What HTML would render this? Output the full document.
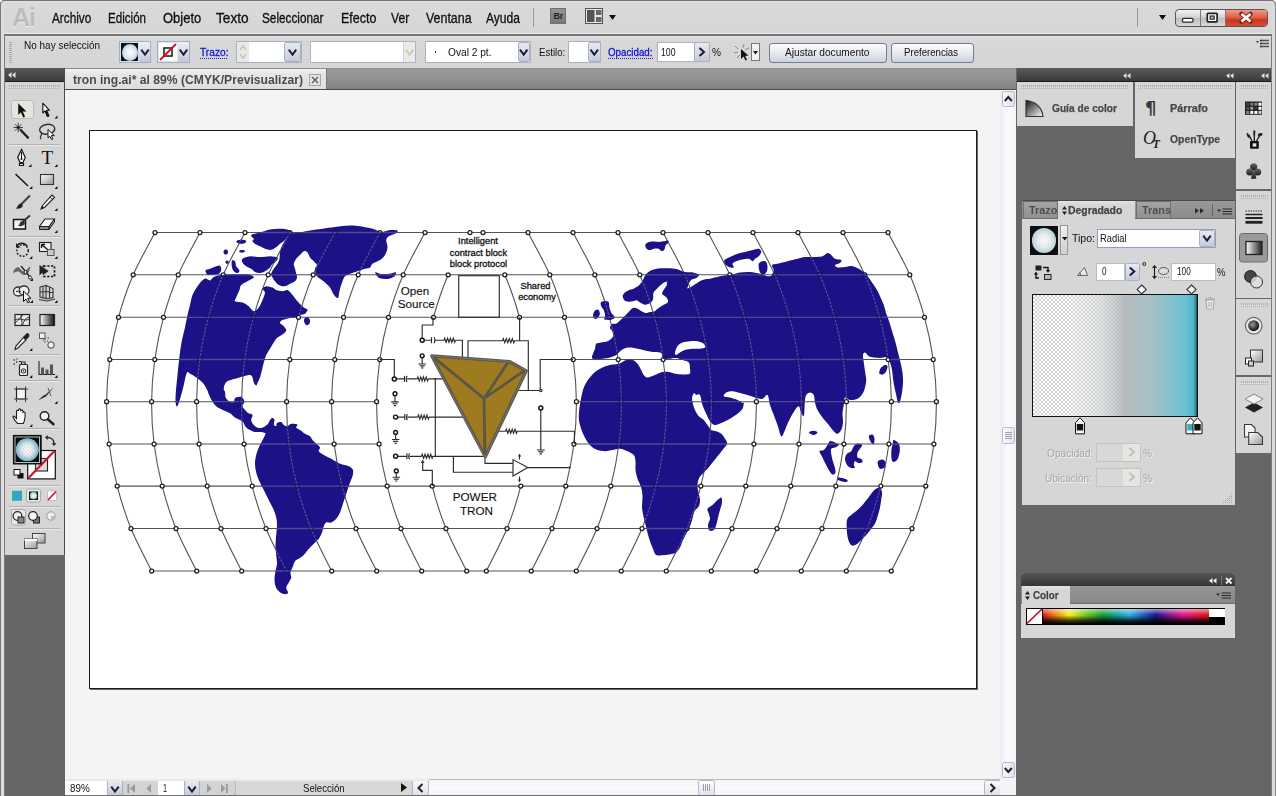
<!DOCTYPE html>
<html lang="es"><head><meta charset="utf-8"><title>tron ing.ai</title>
<style>
html,body{margin:0;padding:0}
body{width:1276px;height:796px;overflow:hidden;position:relative;background:#666;
 font-family:"Liberation Sans","DejaVu Sans",sans-serif;font-size:11px;color:#000;line-height:1}
.a{position:absolute}
.t{position:absolute;white-space:nowrap}
.pb{font-family:"DejaVu Sans","Liberation Sans",sans-serif;font-weight:bold;color:#4a4a4a;font-size:10px;letter-spacing:-.2px}
svg{position:absolute;overflow:visible}
.grip{position:absolute;height:4px;background-image:linear-gradient(0deg,transparent 0 1.500px,#d6d6d6 1.500px 2.500px,transparent 2.500px 4px),repeating-linear-gradient(90deg,#acacac 0 1px,transparent 1px 2px);opacity:.9}
.inp{position:absolute;background:#fff;border:1px solid #9aa7bd;box-sizing:border-box}
.ddb{position:absolute;background:linear-gradient(#e8eaf2,#c6c9d8);border:1px solid #aab0c4;box-sizing:border-box;border-radius:2px}
.btn{position:absolute;box-sizing:border-box;border:1px solid #6f7f9c;border-radius:3px;background:linear-gradient(#fdfdfd,#e4e5ea 60%,#cdd0dc);text-align:center}
</style></head>
<body>
<div class="a" style="left:0;top:0;width:1276px;height:34px;background:linear-gradient(#e4e4e4 0,#dadada 3px,#d6d6d6 100%)"></div>
<div class="a" style="left:4px;top:33px;width:1268px;height:1px;background:#ececec"></div>
<div class="a" style="left:4px;top:34px;width:1268px;height:1.600px;background:#747474"></div>
<div class="t" style="left:12px;top:5px;font-size:25px;color:#bdbdbd;font-weight:bold;letter-spacing:-1px;text-shadow:0 1px 0 #eee">Ai</div>
<div class="t" style="left:51.7px;top:11.16px;font-size:14px;line-height:14px;color:#111;font-family:'Liberation Sans',sans-serif;transform:scaleX(0.842);transform-origin:0 0;-webkit-text-stroke:.3px #111;">Archivo</div>
<div class="t" style="left:108px;top:11.16px;font-size:14px;line-height:14px;color:#111;font-family:'Liberation Sans',sans-serif;transform:scaleX(0.828);transform-origin:0 0;-webkit-text-stroke:.3px #111;">Edición</div>
<div class="t" style="left:162.5px;top:11.16px;font-size:14px;line-height:14px;color:#111;font-family:'Liberation Sans',sans-serif;transform:scaleX(0.926);transform-origin:0 0;-webkit-text-stroke:.3px #111;">Objeto</div>
<div class="t" style="left:216px;top:11.16px;font-size:14px;line-height:14px;color:#111;font-family:'Liberation Sans',sans-serif;transform:scaleX(0.977);transform-origin:0 0;-webkit-text-stroke:.3px #111;">Texto</div>
<div class="t" style="left:262px;top:11.16px;font-size:14px;line-height:14px;color:#111;font-family:'Liberation Sans',sans-serif;transform:scaleX(0.841);transform-origin:0 0;-webkit-text-stroke:.3px #111;">Seleccionar</div>
<div class="t" style="left:340.5px;top:11.16px;font-size:14px;line-height:14px;color:#111;font-family:'Liberation Sans',sans-serif;transform:scaleX(0.894);transform-origin:0 0;-webkit-text-stroke:.3px #111;">Efecto</div>
<div class="t" style="left:390.5px;top:11.16px;font-size:14px;line-height:14px;color:#111;font-family:'Liberation Sans',sans-serif;transform:scaleX(0.866);transform-origin:0 0;-webkit-text-stroke:.3px #111;">Ver</div>
<div class="t" style="left:425.5px;top:11.16px;font-size:14px;line-height:14px;color:#111;font-family:'Liberation Sans',sans-serif;transform:scaleX(0.886);transform-origin:0 0;-webkit-text-stroke:.3px #111;">Ventana</div>
<div class="t" style="left:486px;top:11.16px;font-size:14px;line-height:14px;color:#111;font-family:'Liberation Sans',sans-serif;transform:scaleX(0.862);transform-origin:0 0;-webkit-text-stroke:.3px #111;">Ayuda</div>
<div class="a" style="left:533px;top:8px;width:1px;height:19px;background:#9a9a9a"></div>
<div class="a" style="left:550px;top:8.300px;width:16px;height:15.400px;background:linear-gradient(#929292,#7a7a7a);border:1px solid #707070;box-sizing:border-box"></div>
<div class="t" style="left:553.5px;top:11.5px;font-size:9px;color:#262626;font-weight:bold;letter-spacing:-.3px">Br</div>
<svg width="18" height="16" style="left:585px;top:8px"><rect x=".5" y=".5" width="17" height="15" fill="#e6e6e6" stroke="#555"/><rect x="2" y="2" width="7.5" height="12" fill="#555"/><rect x="11" y="2" width="5.5" height="5" fill="#666"/><rect x="11" y="9" width="5.5" height="5" fill="#666"/></svg>
<svg width="8" height="6" style="left:609px;top:15px"><path d="M0 0H7L3.5 5Z" fill="#111"/></svg>
<div class="a" style="left:1137px;top:8px;width:1px;height:19px;background:#9a9a9a"></div>
<svg width="8" height="6" style="left:1159px;top:15px"><path d="M0 0H7L3.5 5Z" fill="#111"/></svg>
<div class="a" style="left:1175px;top:9px;width:93px;height:18px;border:1px solid #555;border-radius:4px;box-sizing:border-box;overflow:hidden;background:linear-gradient(#f4f4f4,#cfcfcf 50%,#bdbdbd 51%,#d8d8d8)"><div class="a" style="left:24px;top:0;width:1px;height:18px;background:#777"></div><div class="a" style="left:49px;top:0;width:1px;height:18px;background:#777"></div><div class="a" style="left:50px;top:0;width:43px;height:18px;background:linear-gradient(#ee9a86,#e0573f 45%,#c8341c 55%,#d8583c)"></div></div>
<svg width="93" height="18" style="left:1175px;top:9px"><rect x="7.500" y="9.300" width="10.500" height="3.800" fill="#fff" stroke="#2a2a2a" stroke-width="1.300" rx="1.200"/><rect x="32.300" y="4.300" width="9.800" height="8.600" fill="#fff" stroke="#222" stroke-width="1.700" rx=".8"/><rect x="35.200" y="7" width="4" height="3.200" fill="#bbb" stroke="#222" stroke-width="1.100"/><path d="M66.500 5L75.500 12.500M75.500 5L66.500 12.500" stroke="#7a2412" stroke-width="4.600" stroke-linecap="round"/><path d="M66.500 5L75.500 12.500M75.500 5L66.500 12.500" stroke="#fff" stroke-width="2.900" stroke-linecap="butt"/></svg>
<div class="a" style="left:5px;top:35.600px;width:1266px;height:32.400px;background:linear-gradient(#e8e8e8 0,#d8d8d8 2px,#d5d5d5 100%)"></div>
<div class="a" style="left:9px;top:41px;width:3px;height:22px;background-image:repeating-linear-gradient(0deg,#aaa 0 1px,transparent 1px 2px)"></div>
<div class="t" style="left:24px;top:40.27px;font-size:11.5px;line-height:11.5px;color:#111;font-family:'Liberation Sans',sans-serif;transform:scaleX(0.868);transform-origin:0 0;">No hay selección</div>
<div class="a" style="left:119px;top:41px;width:32px;height:22px;border:1px solid #9fb0cc;box-sizing:border-box;background:#dfe3ee"></div>
<div class="a" style="left:121px;top:43px;width:17px;height:18px;background:#0a1216"></div>
<div class="a" style="left:121.500px;top:43.5px;width:16px;height:17px;border-radius:50%;background:radial-gradient(circle,#fdfdfd 0,#dfe9ec 45%,#7fb4c2 100%)"></div>
<div class="a" style="left:139px;top:42px;width:11px;height:20px;background:linear-gradient(#eef0f6,#c3c7d6)"></div>
<svg width="1" height="1" style="left:0;top:0"><polyline points="141.9,50.5 145.0,54.5 148.1,50.5" fill="none" stroke="#1a1a3a" stroke-width="2" stroke-linecap="square"/></svg>
<div class="a" style="left:157px;top:41px;width:33px;height:22px;border:1px solid #9fb0cc;box-sizing:border-box;background:#dfe3ee"></div>
<div class="a" style="left:159px;top:43px;width:18px;height:18px;background:#fff"></div>
<svg width="20" height="20" style="left:158px;top:42px"><rect x="6" y="6" width="8" height="8" fill="none" stroke="#222" stroke-width="1.6"/><path d="M2 18L18 2" stroke="#d0102a" stroke-width="2"/></svg>
<div class="a" style="left:178px;top:42px;width:11px;height:20px;background:linear-gradient(#eef0f6,#c3c7d6)"></div>
<svg width="1" height="1" style="left:0;top:0"><polyline points="180.4,50.5 183.5,54.5 186.6,50.5" fill="none" stroke="#1a1a3a" stroke-width="2" stroke-linecap="square"/></svg>
<div class="t" style="left:199.5px;top:46.57px;font-size:11.5px;line-height:11.5px;color:#1212d8;font-family:'Liberation Sans',sans-serif;transform:scaleX(0.886);transform-origin:0 0;-webkit-text-stroke:.3px #1212d8;">Trazo:</div>
<div class="a" style="left:199.500px;top:58px;width:28.500px;height:1px;background-image:repeating-linear-gradient(90deg,#1414c8 0 1px,transparent 1px 2px)"></div>
<div class="inp" style="left:236px;top:41px;width:66px;height:22px;border-color:#a9b3c6"></div>
<div class="a" style="left:237px;top:42px;width:12px;height:20px;background:#e9e9e4"></div>
<svg width="12" height="20" style="left:237px;top:42px"><path d="M3 8L6 4L9 8M3 12L6 16L9 12" fill="none" stroke="#c3c3bb" stroke-width="1.5"/></svg>
<div class="ddb" style="left:284px;top:42px;width:17px;height:20px"></div>
<svg width="1" height="1" style="left:0;top:0"><polyline points="289.4,50.5 292.5,54.5 295.6,50.5" fill="none" stroke="#1a1a3a" stroke-width="2" stroke-linecap="square"/></svg>
<div class="inp" style="left:310px;top:41px;width:106px;height:22px;border-color:#a9b3c6"></div>
<div class="a" style="left:403px;top:42px;width:12px;height:20px;background:#ebebe6;border-left:1px solid #d4d4ce;box-sizing:border-box"></div>
<svg width="1" height="1" style="left:0;top:0"><polyline points="406.4,50.5 409.5,54.5 412.6,50.5" fill="none" stroke="#c9c9c0" stroke-width="2" stroke-linecap="square"/></svg>
<div class="inp" style="left:424.500px;top:41px;width:106px;height:22px;border-color:#a9b3c6"></div>
<div class="ddb" style="left:517.500px;top:42px;width:12.5px;height:20px"></div>
<svg width="1" height="1" style="left:0;top:0"><polyline points="520.6,50.5 523.7,54.5 526.8,50.5" fill="none" stroke="#1a1a3a" stroke-width="2" stroke-linecap="square"/></svg>
<div class="a" style="left:434.500px;top:51px;width:1.5px;height:1.5px;background:#333"></div>
<div class="t" style="left:447.5px;top:46.57px;font-size:11.5px;line-height:11.5px;color:#111;font-family:'Liberation Sans',sans-serif;transform:scaleX(0.884);transform-origin:0 0;">Oval 2 pt.</div>
<div class="t" style="left:538.7px;top:46.57px;font-size:11.5px;line-height:11.5px;color:#111;font-family:'Liberation Sans',sans-serif;transform:scaleX(0.840);transform-origin:0 0;">Estilo:</div>
<div class="inp" style="left:568px;top:41px;width:33px;height:22px;border-color:#a9b3c6"></div>
<div class="ddb" style="left:588px;top:42px;width:12.5px;height:20px"></div>
<svg width="1" height="1" style="left:0;top:0"><polyline points="591.2,50.5 594.3,54.5 597.4,50.5" fill="none" stroke="#1a1a3a" stroke-width="2" stroke-linecap="square"/></svg>
<div class="t" style="left:608px;top:46.57px;font-size:11.5px;line-height:11.5px;color:#1212d8;font-family:'Liberation Sans',sans-serif;transform:scaleX(0.849);transform-origin:0 0;-webkit-text-stroke:.3px #1212d8;">Opacidad:</div>
<div class="a" style="left:608px;top:58px;width:44.500px;height:1px;background-image:repeating-linear-gradient(90deg,#1414c8 0 1px,transparent 1px 2px)"></div>
<div class="inp" style="left:656.500px;top:42px;width:38px;height:20px;border-color:#a9b3c6"></div>
<div class="t" style="left:661px;top:46.69px;font-size:11px;line-height:11px;color:#111;font-family:'Liberation Sans',sans-serif;transform:scaleX(0.790);transform-origin:0 0;">100</div>
<div class="ddb" style="left:694px;top:42px;width:16px;height:20px"></div>
<svg width="1" height="1" style="left:0;top:0"><polyline points="699.500,48 704,52 699.5,56" fill="none" stroke="#1a1a3a" stroke-width="2"/></svg>
<div class="t" style="left:712px;top:46.57px;font-size:11.5px;line-height:11.5px;color:#111;font-family:'Liberation Sans',sans-serif;transform:scaleX(0.880);transform-origin:0 0;">%</div>
<svg width="18" height="18" style="left:733px;top:43px"><path d="M2 3l3 3M11 1l-1 4M16 5l-4 2M1 10l4-1M4 15l3-3" stroke="#888" stroke-width="1"/><path d="M8 6v10l2.500-2.500 2 4 1.500-.7-2-4h3.500z" fill="#111"/></svg>
<div class="a" style="left:750.500px;top:43px;width:9px;height:18px;border:1px solid #777;box-sizing:border-box;background:#f2f2f2"></div>
<svg width="6" height="4" style="left:752.500px;top:51px"><path d="M0 0H5L2.500 3.500Z" fill="#111"/></svg>
<div class="btn" style="left:768.500px;top:42.5px;width:118px;height:20px"></div>
<div class="t" style="left:784.5px;top:47.07px;font-size:11.5px;line-height:11.5px;color:#111;font-family:'Liberation Sans',sans-serif;transform:scaleX(0.881);transform-origin:0 0;">Ajustar documento</div>
<div class="btn" style="left:891px;top:42.5px;width:83px;height:20px"></div>
<div class="t" style="left:904px;top:47.07px;font-size:11.5px;line-height:11.5px;color:#111;font-family:'Liberation Sans',sans-serif;transform:scaleX(0.837);transform-origin:0 0;">Preferencias</div>
<svg width="14" height="10" style="left:1256px;top:39px"><path d="M0 2H3L1.500 4Z" fill="#333"/><path d="M5 1.500H13M5 4.500H13M5 7.500H13" stroke="#555" stroke-width="1.400"/><path d="M4 1.500H5.500M4 4.500H5.500M4 7.500H5.500" stroke="#222" stroke-width="1.400"/></svg>
<div class="a" style="left:65px;top:68px;width:951px;height:21px;background:linear-gradient(#8a8a8a 0,#9a9a9a 2px,#929292 50%,#828282 100%)"></div>
<div class="a" style="left:65px;top:89px;width:951px;height:1px;background:#4c4c4c"></div>
<div class="a" style="left:65px;top:69px;width:262px;height:20px;background:linear-gradient(#f2f2f2,#e6e6e6 5px,#dedede);border-right:1px solid #777;box-sizing:border-box"></div>
<div class="t" style="left:73.2px;top:72.7px;font-size:13px;line-height:13px;color:#4b4b4b;font-family:'Liberation Sans',sans-serif;font-weight:bold;transform:scaleX(0.934);transform-origin:0 0;">tron ing.ai* al 89% (CMYK/Previsualizar)</div>
<svg width="12" height="12" style="left:309px;top:74px"><rect x=".5" y=".5" width="11" height="11" fill="#e2e2e2" stroke="#a8a8a8"/><path d="M3 3L9 9M9 3L3 9" stroke="#555" stroke-width="1.200"/></svg>
<div class="a" style="left:65px;top:90px;width:935px;height:689px;background:#f4f4f4"></div>
<div class="a" style="left:88.500px;top:129.500px;width:888.500px;height:559px;background:#fff;border:1.300px solid #1c1c1c;box-sizing:border-box;box-shadow:1px 1px 0 #666"></div>
<svg width="1276" height="796" viewBox="0 0 1276 796" style="left:0;top:0">
<defs><g id="land">
<path d="M204.5 278.8C206.6 277.8 208.5 280.8 210.0 280.5C211.5 280.2 211.7 277.9 213.8 277.0C215.8 276.1 219.4 275.4 222.5 275.0C225.6 274.6 229.2 274.6 232.5 274.5C235.8 274.4 239.6 274.4 242.5 274.5C245.4 274.6 248.1 274.5 250.0 275.0C251.9 275.5 254.2 276.5 253.8 277.5C253.3 278.5 249.6 280.0 247.5 281.2C245.4 282.5 242.6 283.5 241.2 285.0C239.9 286.5 240.3 287.9 239.5 290.0C238.7 292.1 237.0 295.6 236.2 297.5C235.5 299.4 234.0 300.4 235.0 301.2C236.0 302.1 240.2 301.7 242.5 302.5C244.8 303.3 246.9 304.8 248.8 306.2C250.6 307.7 252.1 311.0 253.8 311.2C255.4 311.5 257.3 309.4 258.8 307.5C260.2 305.6 261.5 302.5 262.5 300.0C263.5 297.5 265.0 294.4 265.0 292.5C265.0 290.6 262.3 289.8 262.5 288.8C262.7 287.7 264.6 286.5 266.2 286.2C267.9 286.0 270.8 286.9 272.5 287.5C274.2 288.1 274.6 289.4 276.2 290.0C277.9 290.6 280.6 291.2 282.5 291.2C284.4 291.2 285.8 289.4 287.5 290.0C289.2 290.6 290.8 293.1 292.5 295.0C294.2 296.9 295.6 299.2 297.5 301.2C299.4 303.3 302.1 306.1 303.8 307.5C305.4 308.9 307.3 308.5 307.5 309.5C307.7 310.5 306.2 312.8 305.0 313.8C303.8 314.7 301.5 314.5 300.0 315.0C298.5 315.5 297.9 316.5 296.2 317.0C294.6 317.5 292.3 317.5 290.0 318.0C287.7 318.5 284.2 319.2 282.5 320.0C280.8 320.8 279.8 322.0 280.0 323.0C280.2 324.0 282.7 325.0 283.8 326.2C284.8 327.5 286.5 329.1 286.2 330.5C286.0 331.9 284.0 333.3 282.5 334.5C281.0 335.7 279.0 336.2 277.5 337.5C276.0 338.8 275.0 340.6 273.8 342.5C272.5 344.4 271.2 346.7 270.0 348.8C268.8 350.8 267.3 352.7 266.2 355.0C265.2 357.3 264.5 360.0 263.8 362.5C263.0 365.0 262.6 367.5 262.0 370.0C261.4 372.5 260.8 375.3 260.0 377.5C259.2 379.7 258.1 381.7 257.5 383.0C256.9 384.3 256.9 385.6 256.2 385.5C255.6 385.4 254.4 383.8 253.8 382.5C253.1 381.2 253.1 378.8 252.5 377.5C251.9 376.2 251.5 375.2 250.0 375.0C248.5 374.8 246.2 375.6 243.8 376.2C241.2 376.9 237.7 377.9 235.0 378.8C232.3 379.6 229.2 380.2 227.5 381.2C225.8 382.3 225.1 383.5 224.5 385.0C223.9 386.5 223.7 388.1 223.8 390.0C223.8 391.9 224.2 394.4 225.0 396.2C225.8 398.1 227.3 400.3 228.8 401.2C230.2 402.2 232.7 402.5 233.8 402.0C234.8 401.5 234.0 398.8 235.0 398.0C236.0 397.2 238.5 396.7 240.0 397.0C241.5 397.3 243.3 398.5 243.8 400.0C244.2 401.5 242.1 404.4 242.5 406.2C242.9 408.1 245.2 409.8 246.2 411.2C247.3 412.7 249.8 414.2 248.8 415.0C247.7 415.8 242.2 416.1 240.0 416.0C237.8 415.9 236.9 415.1 235.2 414.2C233.6 413.4 232.1 411.6 230.2 410.8C228.4 409.9 226.2 409.9 224.0 409.2C221.8 408.6 219.0 408.2 217.0 406.8C215.0 405.3 213.5 403.0 212.0 400.5C210.5 398.0 209.5 394.7 208.0 391.8C206.5 388.8 205.1 385.5 203.0 383.0C200.9 380.5 197.3 378.2 195.2 376.8C193.2 375.2 191.9 374.7 190.5 374.0C189.1 373.3 188.1 370.7 187.0 372.5C185.9 374.3 184.8 380.8 183.8 385.0C182.7 389.2 181.6 393.9 180.5 397.5C179.4 401.1 177.8 406.1 177.0 406.5C176.2 406.9 175.6 403.2 175.5 400.0C175.4 396.8 175.9 391.7 176.2 387.5C176.6 383.3 177.1 379.2 177.5 375.0C177.9 370.8 178.3 366.2 178.8 362.5C179.2 358.8 179.5 356.2 180.0 352.5C180.5 348.8 181.2 344.2 182.0 340.0C182.8 335.8 184.1 331.7 185.0 327.5C185.9 323.3 186.7 318.8 187.5 315.0C188.3 311.2 189.2 308.3 190.0 305.0C190.8 301.7 191.2 298.1 192.5 295.0C193.8 291.9 195.5 289.0 197.5 286.2C199.5 283.5 202.4 279.7 204.5 278.8Z"/>
<path d="M290.0 233.8C292.3 232.7 296.7 233.0 300.0 232.5C303.3 232.0 306.2 231.1 310.0 230.5C313.8 229.9 318.3 229.3 322.5 228.8C326.7 228.2 330.4 227.5 335.0 227.0C339.6 226.5 345.8 225.6 350.0 225.5C354.2 225.4 356.2 225.7 360.0 226.2C363.8 226.8 369.0 227.8 372.5 228.8C376.0 229.7 378.3 231.8 381.2 232.0C384.2 232.2 387.3 230.2 390.0 230.0C392.7 229.8 396.7 229.9 397.5 230.5C398.3 231.1 396.5 232.8 395.0 233.8C393.5 234.7 390.2 235.2 388.8 236.2C387.3 237.3 386.5 238.1 386.2 240.0C386.0 241.9 387.7 245.0 387.5 247.5C387.3 250.0 386.2 252.9 385.0 255.0C383.8 257.1 382.1 258.5 380.0 260.0C377.9 261.5 374.2 262.5 372.5 263.8C370.8 265.0 371.2 266.7 370.0 267.5C368.8 268.3 367.1 268.1 365.0 268.8C362.9 269.4 360.0 270.4 357.5 271.2C355.0 272.1 352.1 272.9 350.0 273.8C347.9 274.6 346.2 275.0 345.0 276.2C343.8 277.5 343.3 279.2 342.5 281.2C341.7 283.3 340.6 286.5 340.0 288.8C339.4 291.0 339.1 293.5 338.8 295.0C338.4 296.5 338.6 297.8 338.0 298.0C337.4 298.2 335.9 297.2 335.0 296.2C334.1 295.3 333.3 294.0 332.5 292.5C331.7 291.0 331.2 289.2 330.0 287.5C328.8 285.8 326.7 284.0 325.0 282.5C323.3 281.0 321.5 280.0 320.0 278.8C318.5 277.5 317.1 276.7 316.2 275.0C315.4 273.3 314.9 270.4 315.0 268.8C315.1 267.1 317.2 266.2 317.0 265.0C316.8 263.8 314.9 262.5 313.8 261.2C312.6 260.0 311.0 259.0 310.0 257.5C309.0 256.0 308.5 253.5 307.5 252.5C306.5 251.5 305.0 250.8 303.8 251.2C302.5 251.7 301.2 253.8 300.0 255.0C298.8 256.2 297.3 257.3 296.2 258.8C295.2 260.2 294.0 262.1 293.8 263.8C293.5 265.4 294.6 267.1 295.0 268.8C295.4 270.4 295.9 272.3 296.2 273.8C296.6 275.2 297.2 276.2 297.0 277.5C296.8 278.8 296.2 280.2 295.0 281.2C293.8 282.3 291.7 282.9 290.0 283.8C288.3 284.6 286.9 286.0 285.0 286.2C283.1 286.5 280.4 285.8 278.8 285.0C277.1 284.2 276.0 282.5 275.0 281.2C274.0 280.0 273.1 278.8 272.5 277.5C271.9 276.2 271.0 275.2 271.2 273.8C271.5 272.3 272.7 270.4 273.8 268.8C274.8 267.1 276.5 265.4 277.5 263.8C278.5 262.1 279.1 260.6 279.5 258.8C279.9 256.9 279.5 254.8 280.0 252.5C280.5 250.2 281.5 247.3 282.5 245.0C283.5 242.7 285.0 240.6 286.2 238.8C287.5 236.9 287.7 234.8 290.0 233.8Z"/>
<path d="M251.2 235.0C252.3 234.0 256.9 233.4 260.0 232.5C263.1 231.6 266.7 230.1 270.0 229.5C273.3 228.9 276.9 228.7 280.0 228.8C283.1 228.8 286.9 229.3 288.8 230.0C290.6 230.7 291.5 232.0 291.2 233.0C291.0 234.0 288.5 235.1 287.5 236.2C286.5 237.4 286.2 238.8 285.0 240.0C283.8 241.2 281.2 242.7 280.0 243.8C278.8 244.8 278.5 245.4 277.5 246.2C276.5 247.1 275.0 248.1 273.8 248.8C272.5 249.4 271.5 250.0 270.0 250.0C268.5 250.0 266.7 249.4 265.0 248.8C263.3 248.1 261.5 247.0 260.0 246.2C258.5 245.5 257.5 245.3 256.2 244.5C255.0 243.7 252.9 242.2 252.5 241.2C252.1 240.3 254.0 239.8 253.8 238.8C253.5 237.7 250.2 236.0 251.2 235.0Z"/>
<path d="M242.5 258.8C243.8 257.7 247.1 256.5 250.0 256.2C252.9 256.0 256.7 257.0 260.0 257.0C263.3 257.0 267.1 256.2 270.0 256.2C272.9 256.3 276.5 256.7 277.5 257.5C278.5 258.3 277.1 260.2 276.2 261.2C275.4 262.3 273.5 262.7 272.5 263.8C271.5 264.8 271.2 266.2 270.0 267.5C268.8 268.8 266.7 270.3 265.0 271.2C263.3 272.2 261.7 272.9 260.0 273.0C258.3 273.1 256.5 272.7 255.0 272.0C253.5 271.3 252.7 269.7 251.2 268.8C249.8 267.8 247.7 267.3 246.2 266.2C244.8 265.2 243.1 263.8 242.5 262.5C241.9 261.2 241.2 259.8 242.5 258.8Z"/>
<path d="M236.2 241.8C236.1 241.1 237.5 240.3 238.8 240.0C240.0 239.7 242.5 239.5 243.8 239.8C245.0 240.0 246.1 240.7 246.2 241.2C246.4 241.8 245.6 242.8 244.5 243.2C243.4 243.7 240.9 244.0 239.5 243.8C238.1 243.5 236.4 242.4 236.2 241.8Z"/>
<path d="M223.5 252.0C223.5 251.3 223.9 250.4 224.5 250.0C225.1 249.6 226.4 249.4 227.0 249.8C227.6 250.1 228.0 251.2 228.0 252.0C228.0 252.8 227.6 253.9 227.0 254.2C226.4 254.6 225.1 254.6 224.5 254.2C223.9 253.9 223.5 252.7 223.5 252.0Z"/>
<path d="M239.2 251.2C239.3 250.8 240.2 250.2 241.0 250.0C241.8 249.8 243.3 250.0 244.0 250.2C244.7 250.5 245.1 251.1 245.0 251.5C244.9 251.9 244.0 252.3 243.2 252.5C242.5 252.7 241.2 252.7 240.5 252.5C239.8 252.3 239.2 251.7 239.2 251.2Z"/>
<path d="M225.5 262.0C225.6 261.5 226.0 260.7 226.5 260.5C227.0 260.3 227.9 260.7 228.2 261.0C228.6 261.3 228.9 262.0 228.8 262.5C228.6 263.0 228.0 263.6 227.5 263.8C227.0 263.9 226.3 263.8 226.0 263.5C225.7 263.2 225.4 262.5 225.5 262.0Z"/>
<path d="M232.0 260.5C232.5 259.7 234.3 260.3 235.0 261.2C235.7 262.2 235.5 264.7 236.2 266.2C237.0 267.8 239.3 269.4 239.5 270.5C239.7 271.6 238.5 272.9 237.5 273.0C236.5 273.1 234.7 272.4 233.8 271.2C232.8 270.1 232.0 268.0 231.8 266.2C231.5 264.5 231.5 261.3 232.0 260.5Z"/>
<path d="M205.5 270.5C205.9 269.5 208.2 269.5 210.0 268.8C211.8 268.0 214.6 266.8 216.2 266.2C217.9 265.8 219.2 265.1 220.0 265.8C220.8 266.4 221.5 268.7 221.2 270.0C221.0 271.3 220.2 273.0 218.8 273.8C217.3 274.5 214.4 274.4 212.5 274.5C210.6 274.6 208.7 275.2 207.5 274.5C206.3 273.8 205.1 271.5 205.5 270.5Z"/>
<path d="M375.2 272.0C375.4 271.5 377.0 272.7 378.0 273.0C379.0 273.3 379.5 273.8 381.0 274.0C382.5 274.2 384.9 274.2 386.8 274.1C388.6 274.0 390.5 273.5 392.0 273.2C393.5 273.0 395.2 272.1 395.8 272.4C396.3 272.7 395.5 274.3 395.2 275.0C395.0 275.7 395.2 276.1 394.0 276.8C392.8 277.4 390.2 278.6 388.0 278.9C385.8 279.2 382.8 279.1 381.0 278.6C379.2 278.1 378.0 277.1 377.0 276.0C376.0 274.9 375.1 272.5 375.2 272.0Z"/>
<path d="M304.0 321.2C303.8 320.1 304.3 318.6 305.0 318.0C305.7 317.4 307.2 317.1 308.0 317.5C308.8 317.9 309.8 319.4 310.0 320.5C310.2 321.6 309.9 323.2 309.2 324.0C308.6 324.8 307.1 325.5 306.2 325.0C305.4 324.5 304.2 322.4 304.0 321.2Z"/>
<path d="M208.8 390.0C206.8 391.8 210.5 397.7 212.0 400.5C213.5 403.3 215.5 405.3 217.5 407.0C219.5 408.7 221.8 409.4 224.0 410.5C226.2 411.6 228.8 412.4 230.5 413.5C232.2 414.6 233.0 416.2 234.5 417.2C236.0 418.3 238.0 418.9 239.5 419.8C241.0 420.6 242.2 421.0 243.2 422.2C244.3 423.5 244.6 425.7 245.8 427.0C246.9 428.3 248.5 429.2 250.0 430.0C251.5 430.8 253.1 431.7 255.0 432.0C256.9 432.3 259.2 431.9 261.2 432.0C263.3 432.1 265.8 434.1 267.5 432.5C269.2 430.9 271.2 423.8 271.2 422.5C271.2 421.2 268.8 423.8 267.5 424.5C266.2 425.2 265.2 426.4 263.8 427.0C262.3 427.6 260.4 428.3 258.8 428.0C257.1 427.7 255.0 426.3 253.8 425.0C252.5 423.7 251.5 421.7 251.2 420.0C251.0 418.3 253.1 416.2 252.5 415.0C251.9 413.8 249.2 413.6 247.5 413.0C245.8 412.4 243.5 412.4 242.5 411.2C241.5 410.1 241.0 407.9 241.2 406.2C241.5 404.6 243.8 402.8 243.8 401.2C243.8 399.7 242.3 397.5 241.2 397.0C240.2 396.5 238.5 397.1 237.5 398.0C236.5 398.9 236.2 401.5 235.0 402.5C233.8 403.5 231.6 404.2 230.0 403.8C228.4 403.3 226.5 402.3 225.5 400.0C224.5 397.7 226.5 391.7 223.8 390.0C221.0 388.3 210.7 388.2 208.8 390.0Z"/>
<path d="M272.5 418.0C273.2 418.0 274.3 418.9 274.5 420.0C274.7 421.1 273.5 423.5 273.8 424.5C274.0 425.5 275.7 426.5 276.2 426.2C276.8 426.0 276.2 423.7 277.0 423.0C277.8 422.3 280.1 421.7 281.2 422.0C282.4 422.3 282.7 424.3 283.8 425.0C284.8 425.7 286.2 426.5 287.5 426.2C288.8 426.0 289.6 424.0 291.2 423.8C292.9 423.5 296.7 423.9 297.5 424.5C298.3 425.1 295.8 426.6 296.2 427.5C296.7 428.4 298.5 429.0 300.0 430.0C301.5 431.0 303.3 432.7 305.0 433.8C306.7 434.8 308.8 435.2 310.0 436.2C311.2 437.3 311.5 438.8 312.5 440.0C313.5 441.2 315.0 442.5 316.2 443.8C317.5 445.0 319.6 446.2 320.0 447.5C320.4 448.8 318.1 450.0 318.8 451.2C319.4 452.5 321.5 453.6 323.8 455.0C326.0 456.4 329.8 458.0 332.5 459.5C335.2 461.0 337.3 462.6 340.0 463.8C342.7 464.9 346.6 465.2 348.8 466.2C350.9 467.3 352.4 468.3 353.0 470.0C353.6 471.7 353.0 474.2 352.5 476.2C352.0 478.3 350.8 480.2 350.0 482.5C349.2 484.8 348.3 487.5 347.5 490.0C346.7 492.5 345.8 495.0 345.0 497.5C344.2 500.0 343.3 502.5 342.5 505.0C341.7 507.5 341.0 510.2 340.0 512.5C339.0 514.8 337.7 517.1 336.2 518.8C334.8 520.4 332.9 521.9 331.2 522.5C329.6 523.1 327.5 521.9 326.2 522.5C325.0 523.1 324.5 524.6 323.8 526.2C323.0 527.9 322.8 530.4 322.0 532.5C321.2 534.6 320.1 536.9 318.8 538.8C317.4 540.6 315.4 542.1 313.8 543.8C312.1 545.4 310.4 546.9 308.8 548.8C307.1 550.6 305.4 553.3 303.8 555.0C302.1 556.7 300.2 557.7 298.8 558.8C297.3 559.8 296.0 559.8 295.0 561.2C294.0 562.7 293.2 565.6 292.5 567.5C291.8 569.4 290.7 570.8 290.5 572.5C290.3 574.2 291.5 575.8 291.2 577.5C291.0 579.2 289.6 580.8 288.8 582.5C287.9 584.2 286.4 585.8 286.2 587.5C286.1 589.2 288.4 591.9 288.0 593.0C287.6 594.1 285.3 594.3 283.8 594.0C282.2 593.7 280.1 592.5 278.8 591.2C277.4 590.0 276.2 588.3 275.5 586.2C274.8 584.2 274.5 581.2 274.5 578.8C274.5 576.2 275.1 573.8 275.5 571.2C275.9 568.8 276.9 566.5 277.0 563.8C277.1 561.0 276.5 558.1 276.2 555.0C276.0 551.9 275.5 548.3 275.5 545.0C275.5 541.7 276.0 538.3 276.2 535.0C276.5 531.7 277.0 527.9 277.0 525.0C277.0 522.1 276.8 520.0 276.2 517.5C275.7 515.0 274.8 512.5 273.8 510.0C272.7 507.5 271.2 505.0 270.0 502.5C268.8 500.0 267.5 497.5 266.2 495.0C265.0 492.5 263.8 490.0 262.5 487.5C261.2 485.0 259.8 482.5 258.8 480.0C257.7 477.5 256.9 475.2 256.2 472.5C255.6 469.8 255.0 466.7 255.0 463.8C255.0 460.8 255.6 457.7 256.2 455.0C256.9 452.3 257.8 449.8 258.8 447.5C259.7 445.2 261.0 443.3 262.0 441.2C263.0 439.2 264.3 436.9 265.0 435.0C265.7 433.1 265.8 431.8 266.2 430.0C266.8 428.2 267.4 426.2 268.0 424.5C268.6 422.8 269.2 421.1 270.0 420.0C270.8 418.9 271.8 418.0 272.5 418.0Z"/>
<path d="M622.7 296.5C622.5 295.3 623.3 294.2 624.0 293.4C624.6 292.6 625.4 292.1 626.5 291.5C627.5 290.9 629.0 290.1 630.3 289.6C631.5 289.1 632.6 289.1 634.0 288.4C635.5 287.6 637.6 286.6 639.0 285.2C640.5 283.9 641.8 281.9 642.8 280.2C643.9 278.5 644.1 276.7 645.3 275.2C646.6 273.6 648.3 271.9 650.4 270.8C652.4 269.7 655.0 269.1 657.9 268.6C660.8 268.2 664.8 268.2 667.9 268.3C671.1 268.4 674.0 268.5 676.7 269.1C679.5 269.8 681.5 271.5 684.3 272.0C687.0 272.6 690.7 272.0 693.1 272.4C695.5 272.8 698.1 273.7 698.7 274.5C699.3 275.4 698.0 276.9 696.8 277.7C695.7 278.5 693.1 278.7 691.8 279.6C690.6 280.4 690.3 280.9 689.3 282.7C688.2 284.5 687.8 289.0 685.5 290.3C683.2 291.5 678.4 291.3 675.5 290.3C672.5 289.2 669.3 285.4 667.9 284.0C666.6 282.5 668.1 281.6 667.3 281.5C666.5 281.4 664.5 282.3 662.9 283.3C661.3 284.4 659.5 286.2 657.9 287.7C656.3 289.3 654.3 290.9 653.5 292.8C652.7 294.6 653.6 297.4 653.1 299.0C652.6 300.7 651.6 301.9 650.4 302.8C649.1 303.8 647.0 304.7 645.3 304.7C643.7 304.7 641.8 303.5 640.3 302.8C638.8 302.1 638.0 300.5 636.5 300.3C635.1 300.1 633.4 301.5 631.5 301.6C629.6 301.7 626.7 301.8 625.2 300.9C623.8 300.1 622.9 297.8 622.7 296.5Z"/>
<path d="M600.7 302.8C601.0 301.9 602.2 301.4 603.2 301.2C604.3 300.9 606.1 301.0 607.0 301.3C608.0 301.6 608.5 301.7 608.9 302.8C609.3 303.9 609.1 306.2 609.5 307.8C609.9 309.5 610.6 311.4 611.4 312.9C612.2 314.3 614.2 315.6 614.5 316.6C614.9 317.7 614.2 318.6 613.3 319.1C612.3 319.7 610.4 319.7 608.9 319.8C607.4 319.8 605.1 320.1 604.5 319.4C603.9 318.7 605.2 316.9 605.1 315.4C605.0 313.9 604.5 311.8 603.9 310.4C603.2 308.9 601.9 307.8 601.4 306.6C600.8 305.3 600.4 303.7 600.7 302.8Z"/>
<path d="M593.2 314.1C593.4 313.0 594.2 311.1 595.1 310.4C595.9 309.6 597.4 309.3 598.2 309.7C599.0 310.1 599.7 311.7 599.8 312.9C600.0 314.0 599.5 315.6 598.8 316.6C598.2 317.7 596.6 319.0 595.7 319.1C594.8 319.3 594.0 318.1 593.6 317.3C593.1 316.4 592.9 315.3 593.2 314.1Z"/>
<path d="M645.3 245.0C645.5 244.0 646.6 243.1 647.8 242.5C649.1 241.9 651.0 241.6 652.9 241.5C654.7 241.4 657.3 241.9 659.1 241.9C661.0 241.8 662.7 241.5 664.2 241.3C665.7 241.0 667.6 240.1 668.2 240.4C668.8 240.7 668.4 242.3 667.9 243.1C667.5 244.0 666.0 244.6 665.4 245.7C664.8 246.7 665.1 248.5 664.4 249.4C663.8 250.3 662.6 251.2 661.7 251.1C660.7 251.0 659.8 249.2 658.5 248.8C657.3 248.4 655.6 248.6 654.1 248.8C652.7 249.0 651.0 250.1 649.7 250.1C648.5 250.1 647.3 249.6 646.6 248.8C645.9 248.0 645.1 246.1 645.3 245.0Z"/>
<path d="M724.5 260.0C725.3 258.9 727.8 258.0 730.0 257.0C732.2 256.0 735.0 254.6 737.5 253.8C740.0 252.9 742.5 252.6 745.0 252.0C747.5 251.4 750.2 250.5 752.5 250.0C754.8 249.5 757.3 248.4 758.8 248.8C760.2 249.1 761.2 250.8 761.2 252.0C761.2 253.2 759.8 255.1 758.8 256.2C757.7 257.4 756.0 257.9 755.0 258.8C754.0 259.6 753.5 261.2 752.5 261.2C751.5 261.2 750.4 259.0 748.8 258.8C747.1 258.5 744.6 259.1 742.5 259.5C740.4 259.9 737.9 260.5 736.2 261.2C734.6 262.0 732.9 262.7 732.5 263.8C732.1 264.8 734.4 267.0 733.8 267.5C733.1 268.0 730.2 267.6 728.8 267.0C727.3 266.4 725.7 264.9 725.0 263.8C724.3 262.6 723.7 261.1 724.5 260.0Z"/>
<path d="M758.8 263.8C759.2 262.1 761.2 261.5 762.5 261.2C763.8 261.0 765.4 261.0 766.2 262.0C767.1 263.0 767.5 265.8 767.5 267.5C767.5 269.2 767.1 271.3 766.2 272.5C765.4 273.7 763.6 274.7 762.5 274.5C761.4 274.3 760.1 273.0 759.5 271.2C758.9 269.5 758.2 265.4 758.8 263.8Z"/>
<path d="M879.5 371.2C879.8 370.2 880.3 368.5 881.2 367.5C882.2 366.5 884.0 365.2 885.0 365.0C886.0 364.8 887.3 365.2 887.5 366.2C887.7 367.3 887.0 369.9 886.2 371.2C885.5 372.6 884.1 374.1 883.0 374.5C881.9 374.9 880.1 374.3 879.5 373.8C878.9 373.2 879.2 372.3 879.5 371.2Z"/>
<path d="M808.8 432.5C808.8 431.8 812.3 430.8 813.8 430.8C815.2 430.8 817.5 431.8 817.5 432.5C817.5 433.2 815.2 435.0 813.8 435.0C812.3 435.0 808.8 433.2 808.8 432.5Z"/>
<path d="M819.5 451.2C819.7 450.0 822.4 451.0 823.8 450.0C825.1 449.0 826.5 446.5 827.5 445.0C828.5 443.5 828.8 441.7 830.0 441.2C831.2 440.8 833.5 441.9 835.0 442.5C836.5 443.1 838.8 444.2 838.8 445.0C838.8 445.8 836.2 446.9 835.0 447.5C833.8 448.1 831.9 447.7 831.2 448.8C830.6 449.8 831.0 451.9 831.2 453.8C831.5 455.6 832.0 457.9 832.5 460.0C833.0 462.1 834.0 464.2 834.5 466.2C835.0 468.3 835.8 471.1 835.5 472.5C835.2 473.9 833.6 474.9 832.5 474.5C831.4 474.1 829.9 471.8 828.8 470.0C827.6 468.2 826.5 465.8 825.5 463.8C824.5 461.7 823.5 459.6 822.5 457.5C821.5 455.4 819.3 452.5 819.5 451.2Z"/>
<path d="M845.0 458.8C845.0 456.9 846.0 455.0 847.0 453.8C848.0 452.5 850.1 452.5 851.2 451.2C852.4 450.0 852.7 447.5 853.8 446.2C854.8 445.0 856.1 444.0 857.5 443.8C858.9 443.5 861.6 444.2 862.0 445.0C862.4 445.8 860.8 447.5 860.0 448.8C859.2 450.0 857.9 451.0 857.5 452.5C857.1 454.0 856.9 456.5 857.5 457.5C858.1 458.5 860.4 458.0 861.2 458.8C862.1 459.5 862.9 461.3 862.5 462.0C862.1 462.7 860.0 463.1 858.8 463.0C857.5 462.9 855.8 460.9 855.0 461.2C854.2 461.6 853.8 464.0 853.8 465.0C853.8 466.0 855.4 467.0 855.0 467.5C854.6 468.0 852.6 468.4 851.2 468.0C849.9 467.6 848.0 466.5 847.0 465.0C846.0 463.5 845.0 460.6 845.0 458.8Z"/>
<path d="M837.5 477.5C838.3 477.2 840.8 477.6 842.5 478.0C844.2 478.4 846.9 479.3 847.5 480.0C848.1 480.7 847.3 481.8 846.2 482.0C845.2 482.2 842.7 481.7 841.2 481.2C839.8 480.8 838.1 480.1 837.5 479.5C836.9 478.9 836.7 477.8 837.5 477.5Z"/>
<path d="M868.8 436.2C869.0 434.9 871.5 434.1 872.5 434.5C873.5 434.9 874.3 437.2 874.5 438.8C874.7 440.3 874.3 443.1 873.8 443.8C873.2 444.4 872.1 443.8 871.2 442.5C870.4 441.2 868.5 437.6 868.8 436.2Z"/>
<path d="M878.0 461.2C878.8 460.3 881.2 459.3 882.5 459.5C883.8 459.7 885.2 461.2 885.5 462.5C885.8 463.8 885.4 466.5 884.5 467.5C883.6 468.5 881.1 469.2 880.0 468.8C878.9 468.3 878.3 466.2 878.0 465.0C877.7 463.8 877.2 462.2 878.0 461.2Z"/>
<path d="M893.7 440.0C894.7 440.0 897.8 441.9 898.8 443.7C899.8 445.5 900.0 448.3 899.8 451.0C899.5 453.7 898.5 458.0 897.3 459.7C896.0 461.4 893.3 462.7 892.3 461.3C891.3 459.9 891.2 454.1 891.3 451.2C891.4 448.3 892.4 445.6 892.8 443.7C893.2 441.8 892.7 440.0 893.7 440.0Z"/>
<path d="M707.5 508.8C708.1 507.3 710.8 506.5 712.5 505.0C714.2 503.5 716.0 501.2 717.5 500.0C719.0 498.8 720.5 497.1 721.2 497.5C722.0 497.9 722.2 500.4 722.0 502.5C721.8 504.6 720.7 507.5 720.0 510.0C719.3 512.5 718.6 515.0 718.0 517.5C717.4 520.0 717.0 522.9 716.2 525.0C715.5 527.1 714.9 529.1 713.8 530.0C712.6 530.9 710.5 531.3 709.5 530.5C708.5 529.7 707.9 527.0 708.0 525.0C708.1 523.0 709.9 520.6 710.0 518.8C710.1 516.9 709.2 515.4 708.8 513.8C708.3 512.1 706.9 510.2 707.5 508.8Z"/>
<path d="M847.0 520.0C847.7 517.1 849.5 516.7 851.2 515.0C853.0 513.3 855.6 511.7 857.5 510.0C859.4 508.3 860.8 506.9 862.5 505.0C864.2 503.1 866.0 500.6 867.5 498.8C869.0 496.9 870.0 495.3 871.2 493.8C872.5 492.2 873.5 490.5 875.0 489.5C876.5 488.5 878.8 487.5 880.0 488.0C881.2 488.5 881.8 490.5 882.0 492.5C882.2 494.5 881.6 497.5 881.2 500.0C880.9 502.5 880.5 505.0 880.0 507.5C879.5 510.0 878.8 512.5 878.0 515.0C877.2 517.5 876.6 520.2 875.5 522.5C874.4 524.8 872.8 526.7 871.2 528.8C869.7 530.8 867.9 533.1 866.2 535.0C864.6 536.9 862.9 538.4 861.2 540.0C859.6 541.6 857.8 543.6 856.2 544.5C854.7 545.4 853.2 546.0 852.0 545.5C850.8 545.0 849.6 543.4 848.8 541.2C847.9 539.1 847.3 536.0 847.0 532.5C846.7 529.0 846.3 522.9 847.0 520.0Z"/>
<path fill-rule="evenodd" d="M654.1 311.6C655.6 311.0 656.4 309.5 657.9 308.5C659.4 307.4 661.2 306.4 662.9 305.3C664.6 304.3 667.3 303.4 667.9 302.2C668.6 300.9 667.6 299.1 666.7 297.8C665.7 296.4 662.8 295.3 662.3 294.0C661.8 292.8 662.8 291.7 663.5 290.3C664.3 288.8 666.0 286.6 666.7 285.2C667.4 283.9 666.1 281.7 667.6 282.1C669.0 282.5 672.3 286.7 675.5 287.7C678.7 288.8 683.7 288.8 686.8 288.4C689.8 287.9 691.4 286.5 693.7 285.2C696.0 284.0 698.6 281.8 700.6 280.8C702.6 279.8 704.1 279.5 705.6 279.2C707.2 278.8 707.6 279.2 710.0 278.8C712.4 278.3 716.7 276.9 720.0 276.2C723.3 275.6 726.7 275.6 730.0 275.0C733.3 274.4 736.7 273.0 740.0 272.5C743.3 272.0 746.7 271.8 750.0 272.0C753.3 272.2 757.1 273.0 760.0 273.8C762.9 274.5 765.4 276.0 767.5 276.2C769.6 276.5 771.5 276.0 772.5 275.0C773.5 274.0 773.8 271.7 773.8 270.0C773.7 268.3 771.4 266.0 772.0 265.0C772.6 264.0 774.9 264.4 777.5 263.8C780.1 263.1 784.2 262.1 787.5 261.2C790.8 260.4 794.6 259.5 797.5 258.8C800.4 258.0 802.1 257.3 805.0 257.0C807.9 256.7 812.1 257.1 815.0 257.0C817.9 256.9 820.4 256.9 822.5 256.2C824.6 255.6 826.0 253.2 827.5 253.0C829.0 252.8 830.0 254.0 831.2 255.0C832.5 256.0 833.3 257.9 835.0 258.8C836.7 259.6 840.4 259.3 841.2 260.0C842.1 260.7 841.0 262.2 840.0 263.0C839.0 263.8 835.4 264.2 835.0 265.0C834.6 265.8 835.8 267.2 837.5 267.5C839.2 267.8 842.5 267.2 845.0 267.0C847.5 266.8 850.0 265.8 852.5 266.2C855.0 266.7 857.7 268.1 860.0 269.5C862.3 270.9 864.4 272.5 866.2 274.5C868.1 276.5 869.6 278.9 871.2 281.2C872.9 283.6 874.8 286.2 876.2 288.8C877.7 291.2 878.8 293.5 880.0 296.2C881.2 299.0 882.7 302.1 883.8 305.0C884.8 307.9 885.3 310.8 886.2 313.8C887.2 316.7 888.5 319.4 889.5 322.5C890.5 325.6 891.5 329.2 892.5 332.5C893.5 335.8 894.6 339.2 895.5 342.5C896.4 345.8 897.2 349.2 898.0 352.5C898.8 355.8 899.8 359.2 900.5 362.5C901.2 365.8 902.1 369.2 902.5 372.5C902.9 375.8 903.1 379.2 903.0 382.5C902.9 385.8 902.5 389.4 902.0 392.5C901.5 395.6 900.7 399.6 900.0 401.2C899.3 402.9 898.6 403.5 898.0 402.5C897.4 401.5 896.8 397.5 896.2 395.0C895.7 392.5 895.0 390.2 894.5 387.5C894.0 384.8 893.4 381.7 893.0 378.8C892.6 375.8 892.5 372.7 892.0 370.0C891.5 367.3 890.8 364.6 890.0 362.5C889.2 360.4 889.2 358.2 887.5 357.5C885.8 356.8 882.3 358.0 880.0 358.0C877.7 358.0 875.6 357.8 873.8 357.5C871.9 357.2 870.2 357.1 868.8 356.2C867.3 355.4 866.0 352.7 865.0 352.5C864.0 352.3 863.2 353.3 863.0 355.0C862.8 356.7 863.4 359.8 863.8 362.5C864.1 365.2 864.6 368.3 865.0 371.2C865.4 374.2 866.2 377.3 866.2 380.0C866.2 382.7 865.6 385.2 865.0 387.5C864.4 389.8 863.8 391.9 862.5 393.8C861.2 395.6 859.6 397.7 857.5 398.8C855.4 399.8 852.1 400.2 850.0 400.0C847.9 399.8 846.0 396.7 845.0 397.5C844.0 398.3 844.2 402.3 843.8 405.0C843.3 407.7 842.6 410.8 842.5 413.8C842.4 416.7 843.2 419.8 843.0 422.5C842.8 425.2 842.2 428.1 841.2 430.0C840.3 431.9 838.8 433.5 837.5 433.8C836.2 434.0 835.2 432.7 833.8 431.2C832.3 429.8 830.6 427.3 828.8 425.0C826.9 422.7 824.4 420.0 822.5 417.5C820.6 415.0 818.8 412.5 817.5 410.0C816.2 407.5 815.6 405.0 815.0 402.5C814.4 400.0 814.6 396.7 813.8 395.0C812.9 393.3 811.2 392.5 810.0 392.5C808.8 392.5 807.1 393.8 806.2 395.0C805.4 396.2 805.3 397.9 805.0 400.0C804.7 402.1 804.7 404.8 804.5 407.5C804.3 410.2 804.3 415.4 803.8 416.2C803.2 417.1 802.1 414.2 801.2 412.5C800.4 410.8 799.8 406.7 798.8 406.2C797.7 405.8 796.2 408.3 795.0 410.0C793.8 411.7 792.5 414.0 791.2 416.2C790.0 418.5 788.6 421.2 787.5 423.8C786.4 426.2 785.5 429.2 784.5 431.2C783.5 433.3 782.4 437.3 781.2 436.2C780.1 435.2 778.8 428.5 777.5 425.0C776.2 421.5 775.0 418.3 773.8 415.0C772.5 411.7 771.0 408.3 770.0 405.0C769.0 401.7 768.8 396.0 767.5 395.0C766.2 394.0 764.6 398.3 762.5 398.8C760.4 399.2 757.5 398.1 755.0 397.5C752.5 396.9 750.0 395.8 747.5 395.0C745.0 394.2 742.5 393.6 740.0 393.0C737.5 392.4 734.8 391.3 732.5 391.2C730.2 391.2 727.7 391.7 726.2 392.5C724.8 393.3 723.1 395.4 723.8 396.2C724.4 397.1 727.7 396.9 730.0 397.5C732.3 398.1 735.4 399.1 737.5 400.0C739.6 400.9 741.5 402.6 742.5 403.0C743.5 403.4 743.8 401.5 743.8 402.5C743.8 403.5 743.5 406.9 742.5 408.8C741.5 410.6 739.6 412.1 737.5 413.8C735.4 415.4 732.5 417.3 730.0 418.8C727.5 420.2 725.0 421.5 722.5 422.5C720.0 423.5 717.1 425.2 715.0 425.0C712.9 424.8 711.5 423.1 710.0 421.2C708.5 419.4 707.5 416.5 706.2 413.8C705.0 411.0 703.5 408.1 702.5 405.0C701.5 401.9 701.0 396.7 700.0 395.0C699.0 393.3 697.2 395.3 696.2 395.0C695.3 394.7 694.9 392.7 694.2 393.0C693.6 393.3 692.5 395.4 692.2 397.0C692.0 398.6 692.0 400.3 692.5 402.5C693.0 404.7 694.0 407.7 695.0 410.0C696.0 412.3 697.3 414.6 698.8 416.2C700.2 417.9 702.3 418.5 703.8 420.0C705.2 421.5 706.2 423.3 707.5 425.0C708.8 426.7 709.8 429.0 711.2 430.0C712.7 431.0 714.6 430.6 716.2 431.2C717.9 431.9 719.8 432.5 721.2 433.8C722.7 435.0 724.0 437.1 725.0 438.8C726.0 440.4 727.4 441.9 727.0 443.8C726.6 445.6 724.1 447.9 722.5 450.0C720.9 452.1 719.2 454.2 717.5 456.2C715.8 458.3 714.2 460.4 712.5 462.5C710.8 464.6 709.2 466.9 707.5 468.8C705.8 470.6 704.0 472.1 702.5 473.8C701.0 475.4 699.6 476.7 698.8 478.8C697.9 480.8 697.5 483.8 697.5 486.2C697.5 488.8 698.3 491.5 698.8 493.8C699.2 496.0 700.0 497.9 700.0 500.0C700.0 502.1 699.7 504.4 698.8 506.2C697.8 508.1 695.5 509.2 694.5 511.2C693.5 513.3 693.2 516.2 692.5 518.8C691.8 521.2 691.0 523.8 690.0 526.2C689.0 528.8 687.5 531.2 686.2 533.8C685.0 536.2 683.5 539.0 682.5 541.2C681.5 543.5 681.2 545.5 680.0 547.5C678.8 549.5 677.5 551.8 675.0 553.0C672.5 554.2 668.1 554.7 665.0 555.0C661.9 555.3 658.3 556.2 656.2 555.0C654.2 553.8 653.8 550.4 652.5 547.5C651.2 544.6 649.8 540.8 648.8 537.5C647.7 534.2 647.1 530.8 646.2 527.5C645.4 524.2 644.5 520.8 643.8 517.5C643.0 514.2 642.2 510.8 642.0 507.5C641.8 504.2 642.6 500.8 642.5 497.5C642.4 494.2 642.1 490.6 641.2 487.5C640.4 484.4 638.5 481.7 637.5 478.8C636.5 475.8 635.8 472.9 635.5 470.0C635.2 467.1 635.8 463.8 635.5 461.2C635.2 458.8 635.1 456.7 633.8 455.0C632.4 453.3 629.8 452.3 627.5 451.2C625.2 450.2 622.5 449.0 620.0 448.8C617.5 448.5 615.0 449.6 612.5 450.0C610.0 450.4 607.5 451.2 605.0 451.2C602.5 451.2 599.8 450.8 597.5 450.0C595.2 449.2 593.1 447.9 591.2 446.2C589.4 444.6 587.7 442.3 586.2 440.0C584.8 437.7 583.5 435.0 582.5 432.5C581.5 430.0 580.6 427.5 580.0 425.0C579.4 422.5 578.8 420.4 578.8 417.5C578.7 414.6 579.1 410.8 579.5 407.5C579.9 404.2 580.5 400.8 581.2 397.5C582.0 394.2 582.5 390.6 583.8 387.5C585.0 384.4 586.9 381.3 588.8 378.8C590.6 376.2 592.7 373.9 595.0 372.0C597.3 370.1 600.0 368.7 602.5 367.5C605.0 366.3 607.3 365.6 610.0 365.0C612.7 364.4 616.0 364.6 618.8 363.8C621.5 362.9 624.0 360.6 626.2 360.0C628.5 359.4 630.6 359.4 632.5 360.0C634.4 360.6 636.0 362.1 637.5 363.8C639.0 365.4 640.2 368.1 641.2 370.0C642.3 371.9 642.7 373.8 643.8 375.0C644.8 376.2 645.6 377.5 647.5 377.5C649.4 377.5 652.5 375.9 655.0 375.0C657.5 374.1 660.2 372.5 662.5 372.0C664.8 371.5 666.7 371.7 668.8 372.0C670.8 372.3 672.7 373.3 675.0 373.8C677.3 374.2 680.1 374.5 682.5 374.5C684.9 374.5 688.2 374.7 689.5 373.8C690.8 372.8 690.1 370.6 690.0 368.8C689.9 366.9 690.0 364.0 688.8 362.5C687.5 361.0 684.6 360.8 682.5 360.0C680.4 359.2 678.5 358.2 676.2 358.0C674.0 357.8 671.0 358.6 668.8 358.8C666.5 358.9 664.0 359.5 663.0 358.8C662.0 358.0 663.0 355.5 662.5 354.5C662.0 353.5 661.7 352.9 660.0 352.5C658.3 352.1 655.0 352.3 652.5 352.0C650.0 351.7 647.5 351.0 645.0 350.5C642.5 350.0 640.0 349.2 637.5 348.8C635.0 348.2 632.3 347.5 630.0 347.5C627.7 347.5 625.6 347.9 623.8 348.8C621.9 349.6 620.0 351.5 618.8 352.5C617.5 353.5 617.7 354.2 616.2 355.0C614.8 355.8 612.3 356.9 610.0 357.5C607.7 358.1 604.8 358.4 602.5 358.8C600.2 359.1 598.0 359.6 596.2 359.5C594.5 359.4 592.5 359.0 592.0 358.0C591.5 357.0 592.5 355.3 593.0 353.8C593.5 352.2 594.5 350.4 595.0 348.8C595.5 347.1 595.2 344.8 596.2 343.8C597.3 342.7 599.4 342.9 601.2 342.5C603.1 342.1 605.8 341.9 607.5 341.2C609.2 340.6 610.2 339.8 611.2 338.8C612.3 337.7 613.5 336.2 613.8 335.0C614.0 333.8 613.1 332.4 612.5 331.2C611.9 330.1 610.1 329.2 610.0 328.0C609.9 326.8 610.9 324.7 612.0 324.0C613.1 323.3 614.6 324.6 616.4 323.5C618.2 322.5 620.8 319.7 622.7 317.9C624.6 316.1 626.2 314.4 627.7 312.9C629.3 311.3 630.9 309.3 632.1 308.5C633.4 307.6 633.9 307.5 635.3 307.8C636.6 308.2 638.6 309.5 640.3 310.4C642.0 311.2 643.9 312.6 645.3 312.9C646.8 313.2 647.6 312.4 649.1 312.2C650.6 312.0 652.7 312.2 654.1 311.6ZM675.0 352.5C675.2 351.0 676.2 347.9 677.5 346.2C678.8 344.6 680.4 343.3 682.5 342.5C684.6 341.7 687.5 341.5 690.0 341.2C692.5 341.0 695.2 340.8 697.5 341.2C699.8 341.7 702.5 342.7 703.8 343.8C705.0 344.8 705.6 346.7 705.0 347.5C704.4 348.3 702.1 348.5 700.0 348.8C697.9 349.0 695.0 348.5 692.5 348.8C690.0 349.0 687.1 349.4 685.0 350.0C682.9 350.6 681.5 351.7 680.0 352.5C678.5 353.3 677.1 355.0 676.2 355.0C675.4 355.0 674.8 354.0 675.0 352.5Z"/>
</g><mask id="lm" maskUnits="userSpaceOnUse" x="90" y="200" width="880" height="420"><use href="#land" fill="#fff"/></mask></defs>
<path d="M155.0 232.5C151.4 239.6 139.3 260.7 133.2 274.8C127.1 288.9 122.4 303.2 118.5 317.3C114.6 331.4 111.8 345.4 109.8 359.5C107.8 373.6 106.7 387.6 106.6 401.7C106.5 415.8 107.3 429.9 109.1 444.0C110.9 458.1 113.5 472.0 117.2 486.1C120.9 500.2 125.2 514.4 131.0 528.5C136.8 542.6 148.2 563.9 151.7 571.0M200.0 232.5C196.4 239.6 184.3 260.7 178.2 274.8C172.1 288.9 167.4 303.2 163.5 317.3C159.6 331.4 156.8 345.4 154.8 359.5C152.8 373.6 151.7 387.6 151.6 401.7C151.5 415.8 152.3 429.9 154.1 444.0C155.9 458.1 158.5 472.0 162.2 486.1C165.8 500.2 170.2 514.4 176.0 528.5C181.8 542.6 193.2 563.9 196.7 571.0M245.0 232.5C241.4 239.6 229.3 260.7 223.2 274.8C217.1 288.9 212.4 303.2 208.5 317.3C204.6 331.4 201.8 345.4 199.8 359.5C197.8 373.6 196.7 387.6 196.6 401.7C196.5 415.8 197.3 429.9 199.1 444.0C200.9 458.1 203.5 472.0 207.2 486.1C210.8 500.2 215.2 514.4 221.0 528.5C226.8 542.6 238.2 563.9 241.7 571.0M290.0 232.5C286.4 239.6 274.3 260.7 268.2 274.8C262.1 288.9 257.4 303.2 253.5 317.3C249.6 331.4 246.8 345.4 244.8 359.5C242.8 373.6 241.7 387.6 241.6 401.7C241.5 415.8 242.3 429.9 244.1 444.0C245.9 458.1 248.5 472.0 252.2 486.1C255.8 500.2 260.2 514.4 266.0 528.5C271.8 542.6 283.2 563.9 286.7 571.0M335.0 232.5C331.4 239.6 319.3 260.7 313.2 274.8C307.1 288.9 302.4 303.2 298.5 317.3C294.6 331.4 291.8 345.4 289.8 359.5C287.8 373.6 286.7 387.6 286.6 401.7C286.5 415.8 287.3 429.9 289.1 444.0C290.9 458.1 293.6 472.0 297.2 486.1C300.8 500.2 305.2 514.4 311.0 528.5C316.8 542.6 328.2 563.9 331.7 571.0M380.0 232.5C376.4 239.6 364.3 260.7 358.2 274.8C352.1 288.9 347.4 303.2 343.5 317.3C339.6 331.4 336.8 345.4 334.8 359.5C332.8 373.6 331.7 387.6 331.6 401.7C331.5 415.8 332.3 429.9 334.1 444.0C335.9 458.1 338.6 472.0 342.2 486.1C345.8 500.2 350.2 514.4 356.0 528.5C361.8 542.6 373.2 563.9 376.7 571.0M425.0 232.5C421.4 239.6 409.3 260.7 403.2 274.8C397.1 288.9 392.4 303.2 388.5 317.3C384.6 331.4 381.8 345.4 379.8 359.5C377.8 373.6 376.7 387.6 376.6 401.7C376.5 415.8 377.3 429.9 379.1 444.0C380.9 458.1 383.6 472.0 387.2 486.1C390.8 500.2 395.2 514.4 401.0 528.5C406.8 542.6 418.2 563.9 421.7 571.0M448.2 274.8C442.1 288.9 437.4 303.2 433.5 317.3M432.2 486.1C435.8 500.2 440.2 514.4 446.0 528.5C451.8 542.6 463.2 563.9 466.7 571.0M504.8 274.8C510.9 288.9 515.6 303.2 519.5 317.3M520.8 486.1C517.1 500.2 512.8 514.4 507.0 528.5C501.2 542.6 489.8 563.9 486.3 571.0M528.0 232.5C531.6 239.6 543.7 260.7 549.8 274.8C555.9 288.9 560.6 303.2 564.5 317.3C568.4 331.4 571.2 345.4 573.2 359.5C575.2 373.6 576.3 387.6 576.4 401.7C576.5 415.8 575.7 429.9 573.9 444.0C572.1 458.1 569.4 472.0 565.8 486.1C562.1 500.2 557.8 514.4 552.0 528.5C546.2 542.6 534.8 563.9 531.3 571.0M573.0 232.5C576.6 239.6 588.7 260.7 594.8 274.8C600.9 288.9 605.6 303.2 609.5 317.3C613.4 331.4 616.2 345.4 618.2 359.5C620.2 373.6 621.3 387.6 621.4 401.7C621.5 415.8 620.7 429.9 618.9 444.0C617.1 458.1 614.4 472.0 610.8 486.1C607.1 500.2 602.8 514.4 597.0 528.5C591.2 542.6 579.8 563.9 576.3 571.0M618.0 232.5C621.6 239.6 633.7 260.7 639.8 274.8C645.9 288.9 650.6 303.2 654.5 317.3C658.4 331.4 661.2 345.4 663.2 359.5C665.2 373.6 666.3 387.6 666.4 401.7C666.5 415.8 665.7 429.9 663.9 444.0C662.1 458.1 659.4 472.0 655.8 486.1C652.1 500.2 647.8 514.4 642.0 528.5C636.2 542.6 624.8 563.9 621.3 571.0M663.0 232.5C666.6 239.6 678.7 260.7 684.8 274.8C690.9 288.9 695.6 303.2 699.5 317.3C703.4 331.4 706.2 345.4 708.2 359.5C710.2 373.6 711.3 387.6 711.4 401.7C711.5 415.8 710.7 429.9 708.9 444.0C707.1 458.1 704.4 472.0 700.8 486.1C697.1 500.2 692.8 514.4 687.0 528.5C681.2 542.6 669.8 563.9 666.3 571.0M708.0 232.5C711.6 239.6 723.7 260.7 729.8 274.8C735.9 288.9 740.6 303.2 744.5 317.3C748.4 331.4 751.2 345.4 753.2 359.5C755.2 373.6 756.3 387.6 756.4 401.7C756.5 415.8 755.7 429.9 753.9 444.0C752.1 458.1 749.4 472.0 745.8 486.1C742.1 500.2 737.8 514.4 732.0 528.5C726.2 542.6 714.8 563.9 711.3 571.0M753.0 232.5C756.6 239.6 768.7 260.7 774.8 274.8C780.9 288.9 785.6 303.2 789.5 317.3C793.4 331.4 796.2 345.4 798.2 359.5C800.2 373.6 801.3 387.6 801.4 401.7C801.5 415.8 800.7 429.9 798.9 444.0C797.1 458.1 794.4 472.0 790.8 486.1C787.1 500.2 782.8 514.4 777.0 528.5C771.2 542.6 759.8 563.9 756.3 571.0M798.0 232.5C801.6 239.6 813.7 260.7 819.8 274.8C825.9 288.9 830.6 303.2 834.5 317.3C838.4 331.4 841.2 345.4 843.2 359.5C845.2 373.6 846.3 387.6 846.4 401.7C846.5 415.8 845.7 429.9 843.9 444.0C842.1 458.1 839.4 472.0 835.8 486.1C832.1 500.2 827.8 514.4 822.0 528.5C816.2 542.6 804.8 563.9 801.3 571.0M843.0 232.5C846.6 239.6 858.7 260.7 864.8 274.8C870.9 288.9 875.6 303.2 879.5 317.3C883.4 331.4 886.2 345.4 888.2 359.5C890.2 373.6 891.3 387.6 891.4 401.7C891.5 415.8 890.7 429.9 888.9 444.0C887.1 458.1 884.4 472.0 880.8 486.1C877.1 500.2 872.8 514.4 867.0 528.5C861.2 542.6 849.8 563.9 846.3 571.0M888.0 232.5C891.6 239.6 903.7 260.7 909.8 274.8C915.9 288.9 920.6 303.2 924.5 317.3C928.4 331.4 931.2 345.4 933.2 359.5C935.2 373.6 936.3 387.6 936.4 401.7C936.5 415.8 935.7 429.9 933.9 444.0C932.1 458.1 929.4 472.0 925.8 486.1C922.1 500.2 917.8 514.4 912.0 528.5C906.2 542.6 894.8 563.9 891.3 571.0M155.0 232.5H888.0M133.2 274.8H909.8M118.5 317.3H924.5M109.8 359.5H394.300M540.200 359.5H933.2M106.6 401.7H376.6M576.4 401.7H936.4M109.1 444.0H379.1M573.9 444.0H933.9M117.2 486.1H925.8M131.0 528.5H912.0M151.7 571.0H891.3" fill="none" stroke="#545454" stroke-width="1.100"/><g fill="#fff" stroke="#1c1c1c" stroke-width="1.250"><circle cx="155.0" cy="232.5" r="2"/><circle cx="200.0" cy="232.5" r="2"/><circle cx="245.0" cy="232.5" r="2"/><circle cx="290.0" cy="232.5" r="2"/><circle cx="335.0" cy="232.5" r="2"/><circle cx="380.0" cy="232.5" r="2"/><circle cx="425.0" cy="232.5" r="2"/><circle cx="470.0" cy="232.5" r="2"/><circle cx="483.0" cy="232.5" r="2"/><circle cx="528.0" cy="232.5" r="2"/><circle cx="573.0" cy="232.5" r="2"/><circle cx="618.0" cy="232.5" r="2"/><circle cx="663.0" cy="232.5" r="2"/><circle cx="708.0" cy="232.5" r="2"/><circle cx="753.0" cy="232.5" r="2"/><circle cx="798.0" cy="232.5" r="2"/><circle cx="843.0" cy="232.5" r="2"/><circle cx="888.0" cy="232.5" r="2"/><circle cx="133.2" cy="274.8" r="2"/><circle cx="178.2" cy="274.8" r="2"/><circle cx="223.2" cy="274.8" r="2"/><circle cx="268.2" cy="274.8" r="2"/><circle cx="313.2" cy="274.8" r="2"/><circle cx="358.2" cy="274.8" r="2"/><circle cx="403.2" cy="274.8" r="2"/><circle cx="448.2" cy="274.8" r="2"/><circle cx="504.8" cy="274.8" r="2"/><circle cx="549.8" cy="274.8" r="2"/><circle cx="594.8" cy="274.8" r="2"/><circle cx="639.8" cy="274.8" r="2"/><circle cx="684.8" cy="274.8" r="2"/><circle cx="729.8" cy="274.8" r="2"/><circle cx="774.8" cy="274.8" r="2"/><circle cx="819.8" cy="274.8" r="2"/><circle cx="864.8" cy="274.8" r="2"/><circle cx="909.8" cy="274.8" r="2"/><circle cx="118.5" cy="317.3" r="2"/><circle cx="163.5" cy="317.3" r="2"/><circle cx="208.5" cy="317.3" r="2"/><circle cx="253.5" cy="317.3" r="2"/><circle cx="298.5" cy="317.3" r="2"/><circle cx="343.5" cy="317.3" r="2"/><circle cx="388.5" cy="317.3" r="2"/><circle cx="433.5" cy="317.3" r="2"/><circle cx="519.5" cy="317.3" r="2"/><circle cx="564.5" cy="317.3" r="2"/><circle cx="609.5" cy="317.3" r="2"/><circle cx="654.5" cy="317.3" r="2"/><circle cx="699.5" cy="317.3" r="2"/><circle cx="744.5" cy="317.3" r="2"/><circle cx="789.5" cy="317.3" r="2"/><circle cx="834.5" cy="317.3" r="2"/><circle cx="879.5" cy="317.3" r="2"/><circle cx="924.5" cy="317.3" r="2"/><circle cx="109.8" cy="359.5" r="2"/><circle cx="154.8" cy="359.5" r="2"/><circle cx="199.8" cy="359.5" r="2"/><circle cx="244.8" cy="359.5" r="2"/><circle cx="289.8" cy="359.5" r="2"/><circle cx="334.8" cy="359.5" r="2"/><circle cx="379.8" cy="359.5" r="2"/><circle cx="573.2" cy="359.5" r="2"/><circle cx="618.2" cy="359.5" r="2"/><circle cx="663.2" cy="359.5" r="2"/><circle cx="708.2" cy="359.5" r="2"/><circle cx="753.2" cy="359.5" r="2"/><circle cx="798.2" cy="359.5" r="2"/><circle cx="843.2" cy="359.5" r="2"/><circle cx="888.2" cy="359.5" r="2"/><circle cx="933.2" cy="359.5" r="2"/><circle cx="106.6" cy="401.7" r="2"/><circle cx="151.6" cy="401.7" r="2"/><circle cx="196.6" cy="401.7" r="2"/><circle cx="241.6" cy="401.7" r="2"/><circle cx="286.6" cy="401.7" r="2"/><circle cx="331.6" cy="401.7" r="2"/><circle cx="376.6" cy="401.7" r="2"/><circle cx="576.4" cy="401.7" r="2"/><circle cx="621.4" cy="401.7" r="2"/><circle cx="666.4" cy="401.7" r="2"/><circle cx="711.4" cy="401.7" r="2"/><circle cx="756.4" cy="401.7" r="2"/><circle cx="801.4" cy="401.7" r="2"/><circle cx="846.4" cy="401.7" r="2"/><circle cx="891.4" cy="401.7" r="2"/><circle cx="936.4" cy="401.7" r="2"/><circle cx="109.1" cy="444.0" r="2"/><circle cx="154.1" cy="444.0" r="2"/><circle cx="199.1" cy="444.0" r="2"/><circle cx="244.1" cy="444.0" r="2"/><circle cx="289.1" cy="444.0" r="2"/><circle cx="334.1" cy="444.0" r="2"/><circle cx="379.1" cy="444.0" r="2"/><circle cx="573.9" cy="444.0" r="2"/><circle cx="618.9" cy="444.0" r="2"/><circle cx="663.9" cy="444.0" r="2"/><circle cx="708.9" cy="444.0" r="2"/><circle cx="753.9" cy="444.0" r="2"/><circle cx="798.9" cy="444.0" r="2"/><circle cx="843.9" cy="444.0" r="2"/><circle cx="888.9" cy="444.0" r="2"/><circle cx="933.9" cy="444.0" r="2"/><circle cx="117.2" cy="486.1" r="2"/><circle cx="162.2" cy="486.1" r="2"/><circle cx="207.2" cy="486.1" r="2"/><circle cx="252.2" cy="486.1" r="2"/><circle cx="297.2" cy="486.1" r="2"/><circle cx="342.2" cy="486.1" r="2"/><circle cx="387.2" cy="486.1" r="2"/><circle cx="432.2" cy="486.1" r="2"/><circle cx="520.8" cy="486.1" r="2"/><circle cx="565.8" cy="486.1" r="2"/><circle cx="610.8" cy="486.1" r="2"/><circle cx="655.8" cy="486.1" r="2"/><circle cx="700.8" cy="486.1" r="2"/><circle cx="745.8" cy="486.1" r="2"/><circle cx="790.8" cy="486.1" r="2"/><circle cx="835.8" cy="486.1" r="2"/><circle cx="880.8" cy="486.1" r="2"/><circle cx="925.8" cy="486.1" r="2"/><circle cx="131.0" cy="528.5" r="2"/><circle cx="176.0" cy="528.5" r="2"/><circle cx="221.0" cy="528.5" r="2"/><circle cx="266.0" cy="528.5" r="2"/><circle cx="311.0" cy="528.5" r="2"/><circle cx="356.0" cy="528.5" r="2"/><circle cx="401.0" cy="528.5" r="2"/><circle cx="446.0" cy="528.5" r="2"/><circle cx="507.0" cy="528.5" r="2"/><circle cx="552.0" cy="528.5" r="2"/><circle cx="597.0" cy="528.5" r="2"/><circle cx="642.0" cy="528.5" r="2"/><circle cx="687.0" cy="528.5" r="2"/><circle cx="732.0" cy="528.5" r="2"/><circle cx="777.0" cy="528.5" r="2"/><circle cx="822.0" cy="528.5" r="2"/><circle cx="867.0" cy="528.5" r="2"/><circle cx="912.0" cy="528.5" r="2"/><circle cx="151.7" cy="571.0" r="2"/><circle cx="196.7" cy="571.0" r="2"/><circle cx="241.7" cy="571.0" r="2"/><circle cx="286.7" cy="571.0" r="2"/><circle cx="331.7" cy="571.0" r="2"/><circle cx="376.7" cy="571.0" r="2"/><circle cx="421.7" cy="571.0" r="2"/><circle cx="466.7" cy="571.0" r="2"/><circle cx="486.3" cy="571.0" r="2"/><circle cx="531.3" cy="571.0" r="2"/><circle cx="576.3" cy="571.0" r="2"/><circle cx="621.3" cy="571.0" r="2"/><circle cx="666.3" cy="571.0" r="2"/><circle cx="711.3" cy="571.0" r="2"/><circle cx="756.3" cy="571.0" r="2"/><circle cx="801.3" cy="571.0" r="2"/><circle cx="846.3" cy="571.0" r="2"/><circle cx="891.3" cy="571.0" r="2"/></g>
<use href="#land" fill="#1c1187"/>
<g mask="url(#lm)" fill="none"><path d="M155.0 232.5C151.4 239.6 139.3 260.7 133.2 274.8C127.1 288.9 122.4 303.2 118.5 317.3C114.6 331.4 111.8 345.4 109.8 359.5C107.8 373.6 106.7 387.6 106.6 401.7C106.5 415.8 107.3 429.9 109.1 444.0C110.9 458.1 113.5 472.0 117.2 486.1C120.9 500.2 125.2 514.4 131.0 528.5C136.8 542.6 148.2 563.9 151.7 571.0M200.0 232.5C196.4 239.6 184.3 260.7 178.2 274.8C172.1 288.9 167.4 303.2 163.5 317.3C159.6 331.4 156.8 345.4 154.8 359.5C152.8 373.6 151.7 387.6 151.6 401.7C151.5 415.8 152.3 429.9 154.1 444.0C155.9 458.1 158.5 472.0 162.2 486.1C165.8 500.2 170.2 514.4 176.0 528.5C181.8 542.6 193.2 563.9 196.7 571.0M245.0 232.5C241.4 239.6 229.3 260.7 223.2 274.8C217.1 288.9 212.4 303.2 208.5 317.3C204.6 331.4 201.8 345.4 199.8 359.5C197.8 373.6 196.7 387.6 196.6 401.7C196.5 415.8 197.3 429.9 199.1 444.0C200.9 458.1 203.5 472.0 207.2 486.1C210.8 500.2 215.2 514.4 221.0 528.5C226.8 542.6 238.2 563.9 241.7 571.0M290.0 232.5C286.4 239.6 274.3 260.7 268.2 274.8C262.1 288.9 257.4 303.2 253.5 317.3C249.6 331.4 246.8 345.4 244.8 359.5C242.8 373.6 241.7 387.6 241.6 401.7C241.5 415.8 242.3 429.9 244.1 444.0C245.9 458.1 248.5 472.0 252.2 486.1C255.8 500.2 260.2 514.4 266.0 528.5C271.8 542.6 283.2 563.9 286.7 571.0M335.0 232.5C331.4 239.6 319.3 260.7 313.2 274.8C307.1 288.9 302.4 303.2 298.5 317.3C294.6 331.4 291.8 345.4 289.8 359.5C287.8 373.6 286.7 387.6 286.6 401.7C286.5 415.8 287.3 429.9 289.1 444.0C290.9 458.1 293.6 472.0 297.2 486.1C300.8 500.2 305.2 514.4 311.0 528.5C316.8 542.6 328.2 563.9 331.7 571.0M380.0 232.5C376.4 239.6 364.3 260.7 358.2 274.8C352.1 288.9 347.4 303.2 343.5 317.3C339.6 331.4 336.8 345.4 334.8 359.5C332.8 373.6 331.7 387.6 331.6 401.7C331.5 415.8 332.3 429.9 334.1 444.0C335.9 458.1 338.6 472.0 342.2 486.1C345.8 500.2 350.2 514.4 356.0 528.5C361.8 542.6 373.2 563.9 376.7 571.0M425.0 232.5C421.4 239.6 409.3 260.7 403.2 274.8C397.1 288.9 392.4 303.2 388.5 317.3C384.6 331.4 381.8 345.4 379.8 359.5C377.8 373.6 376.7 387.6 376.6 401.7C376.5 415.8 377.3 429.9 379.1 444.0C380.9 458.1 383.6 472.0 387.2 486.1C390.8 500.2 395.2 514.4 401.0 528.5C406.8 542.6 418.2 563.9 421.7 571.0M448.2 274.8C442.1 288.9 437.4 303.2 433.5 317.3M432.2 486.1C435.8 500.2 440.2 514.4 446.0 528.5C451.8 542.6 463.2 563.9 466.7 571.0M504.8 274.8C510.9 288.9 515.6 303.2 519.5 317.3M520.8 486.1C517.1 500.2 512.8 514.4 507.0 528.5C501.2 542.6 489.8 563.9 486.3 571.0M528.0 232.5C531.6 239.6 543.7 260.7 549.8 274.8C555.9 288.9 560.6 303.2 564.5 317.3C568.4 331.4 571.2 345.4 573.2 359.5C575.2 373.6 576.3 387.6 576.4 401.7C576.5 415.8 575.7 429.9 573.9 444.0C572.1 458.1 569.4 472.0 565.8 486.1C562.1 500.2 557.8 514.4 552.0 528.5C546.2 542.6 534.8 563.9 531.3 571.0M573.0 232.5C576.6 239.6 588.7 260.7 594.8 274.8C600.9 288.9 605.6 303.2 609.5 317.3C613.4 331.4 616.2 345.4 618.2 359.5C620.2 373.6 621.3 387.6 621.4 401.7C621.5 415.8 620.7 429.9 618.9 444.0C617.1 458.1 614.4 472.0 610.8 486.1C607.1 500.2 602.8 514.4 597.0 528.5C591.2 542.6 579.8 563.9 576.3 571.0M618.0 232.5C621.6 239.6 633.7 260.7 639.8 274.8C645.9 288.9 650.6 303.2 654.5 317.3C658.4 331.4 661.2 345.4 663.2 359.5C665.2 373.6 666.3 387.6 666.4 401.7C666.5 415.8 665.7 429.9 663.9 444.0C662.1 458.1 659.4 472.0 655.8 486.1C652.1 500.2 647.8 514.4 642.0 528.5C636.2 542.6 624.8 563.9 621.3 571.0M663.0 232.5C666.6 239.6 678.7 260.7 684.8 274.8C690.9 288.9 695.6 303.2 699.5 317.3C703.4 331.4 706.2 345.4 708.2 359.5C710.2 373.6 711.3 387.6 711.4 401.7C711.5 415.8 710.7 429.9 708.9 444.0C707.1 458.1 704.4 472.0 700.8 486.1C697.1 500.2 692.8 514.4 687.0 528.5C681.2 542.6 669.8 563.9 666.3 571.0M708.0 232.5C711.6 239.6 723.7 260.7 729.8 274.8C735.9 288.9 740.6 303.2 744.5 317.3C748.4 331.4 751.2 345.4 753.2 359.5C755.2 373.6 756.3 387.6 756.4 401.7C756.5 415.8 755.7 429.9 753.9 444.0C752.1 458.1 749.4 472.0 745.8 486.1C742.1 500.2 737.8 514.4 732.0 528.5C726.2 542.6 714.8 563.9 711.3 571.0M753.0 232.5C756.6 239.6 768.7 260.7 774.8 274.8C780.9 288.9 785.6 303.2 789.5 317.3C793.4 331.4 796.2 345.4 798.2 359.5C800.2 373.6 801.3 387.6 801.4 401.7C801.5 415.8 800.7 429.9 798.9 444.0C797.1 458.1 794.4 472.0 790.8 486.1C787.1 500.2 782.8 514.4 777.0 528.5C771.2 542.6 759.8 563.9 756.3 571.0M798.0 232.5C801.6 239.6 813.7 260.7 819.8 274.8C825.9 288.9 830.6 303.2 834.5 317.3C838.4 331.4 841.2 345.4 843.2 359.5C845.2 373.6 846.3 387.6 846.4 401.7C846.5 415.8 845.7 429.9 843.9 444.0C842.1 458.1 839.4 472.0 835.8 486.1C832.1 500.2 827.8 514.4 822.0 528.5C816.2 542.6 804.8 563.9 801.3 571.0M843.0 232.5C846.6 239.6 858.7 260.7 864.8 274.8C870.9 288.9 875.6 303.2 879.5 317.3C883.4 331.4 886.2 345.4 888.2 359.5C890.2 373.6 891.3 387.6 891.4 401.7C891.5 415.8 890.7 429.9 888.9 444.0C887.1 458.1 884.4 472.0 880.8 486.1C877.1 500.2 872.8 514.4 867.0 528.5C861.2 542.6 849.8 563.9 846.3 571.0M888.0 232.5C891.6 239.6 903.7 260.7 909.8 274.8C915.9 288.9 920.6 303.2 924.5 317.3C928.4 331.4 931.2 345.4 933.2 359.5C935.2 373.6 936.3 387.6 936.4 401.7C936.5 415.8 935.7 429.9 933.9 444.0C932.1 458.1 929.4 472.0 925.8 486.1C922.1 500.2 917.8 514.4 912.0 528.5C906.2 542.6 894.8 563.9 891.3 571.0" stroke="#55519c" stroke-width="1.200" stroke-dasharray="2.600 1.200"/><path d="M155.0 232.5H888.0M133.2 274.8H909.8M118.5 317.3H924.5M109.8 359.5H394.300M540.200 359.5H933.2M106.6 401.7H376.6M576.4 401.7H936.4M109.1 444.0H379.1M573.9 444.0H933.9M117.2 486.1H925.8M131.0 528.5H912.0M151.7 571.0H891.3" stroke="#4d4892" stroke-width="1.300"/><g stroke="#17103f" stroke-width="1.300" stroke-opacity=".4"><circle cx="155.0" cy="232.5" r="2.100"/><circle cx="200.0" cy="232.5" r="2.100"/><circle cx="245.0" cy="232.5" r="2.100"/><circle cx="290.0" cy="232.5" r="2.100"/><circle cx="335.0" cy="232.5" r="2.100"/><circle cx="380.0" cy="232.5" r="2.100"/><circle cx="425.0" cy="232.5" r="2.100"/><circle cx="470.0" cy="232.5" r="2.100"/><circle cx="483.0" cy="232.5" r="2.100"/><circle cx="528.0" cy="232.5" r="2.100"/><circle cx="573.0" cy="232.5" r="2.100"/><circle cx="618.0" cy="232.5" r="2.100"/><circle cx="663.0" cy="232.5" r="2.100"/><circle cx="708.0" cy="232.5" r="2.100"/><circle cx="753.0" cy="232.5" r="2.100"/><circle cx="798.0" cy="232.5" r="2.100"/><circle cx="843.0" cy="232.5" r="2.100"/><circle cx="888.0" cy="232.5" r="2.100"/><circle cx="133.2" cy="274.8" r="2.100"/><circle cx="178.2" cy="274.8" r="2.100"/><circle cx="223.2" cy="274.8" r="2.100"/><circle cx="268.2" cy="274.8" r="2.100"/><circle cx="313.2" cy="274.8" r="2.100"/><circle cx="358.2" cy="274.8" r="2.100"/><circle cx="403.2" cy="274.8" r="2.100"/><circle cx="448.2" cy="274.8" r="2.100"/><circle cx="504.8" cy="274.8" r="2.100"/><circle cx="549.8" cy="274.8" r="2.100"/><circle cx="594.8" cy="274.8" r="2.100"/><circle cx="639.8" cy="274.8" r="2.100"/><circle cx="684.8" cy="274.8" r="2.100"/><circle cx="729.8" cy="274.8" r="2.100"/><circle cx="774.8" cy="274.8" r="2.100"/><circle cx="819.8" cy="274.8" r="2.100"/><circle cx="864.8" cy="274.8" r="2.100"/><circle cx="909.8" cy="274.8" r="2.100"/><circle cx="118.5" cy="317.3" r="2.100"/><circle cx="163.5" cy="317.3" r="2.100"/><circle cx="208.5" cy="317.3" r="2.100"/><circle cx="253.5" cy="317.3" r="2.100"/><circle cx="298.5" cy="317.3" r="2.100"/><circle cx="343.5" cy="317.3" r="2.100"/><circle cx="388.5" cy="317.3" r="2.100"/><circle cx="433.5" cy="317.3" r="2.100"/><circle cx="519.5" cy="317.3" r="2.100"/><circle cx="564.5" cy="317.3" r="2.100"/><circle cx="609.5" cy="317.3" r="2.100"/><circle cx="654.5" cy="317.3" r="2.100"/><circle cx="699.5" cy="317.3" r="2.100"/><circle cx="744.5" cy="317.3" r="2.100"/><circle cx="789.5" cy="317.3" r="2.100"/><circle cx="834.5" cy="317.3" r="2.100"/><circle cx="879.5" cy="317.3" r="2.100"/><circle cx="924.5" cy="317.3" r="2.100"/><circle cx="109.8" cy="359.5" r="2.100"/><circle cx="154.8" cy="359.5" r="2.100"/><circle cx="199.8" cy="359.5" r="2.100"/><circle cx="244.8" cy="359.5" r="2.100"/><circle cx="289.8" cy="359.5" r="2.100"/><circle cx="334.8" cy="359.5" r="2.100"/><circle cx="379.8" cy="359.5" r="2.100"/><circle cx="573.2" cy="359.5" r="2.100"/><circle cx="618.2" cy="359.5" r="2.100"/><circle cx="663.2" cy="359.5" r="2.100"/><circle cx="708.2" cy="359.5" r="2.100"/><circle cx="753.2" cy="359.5" r="2.100"/><circle cx="798.2" cy="359.5" r="2.100"/><circle cx="843.2" cy="359.5" r="2.100"/><circle cx="888.2" cy="359.5" r="2.100"/><circle cx="933.2" cy="359.5" r="2.100"/><circle cx="106.6" cy="401.7" r="2.100"/><circle cx="151.6" cy="401.7" r="2.100"/><circle cx="196.6" cy="401.7" r="2.100"/><circle cx="241.6" cy="401.7" r="2.100"/><circle cx="286.6" cy="401.7" r="2.100"/><circle cx="331.6" cy="401.7" r="2.100"/><circle cx="376.6" cy="401.7" r="2.100"/><circle cx="576.4" cy="401.7" r="2.100"/><circle cx="621.4" cy="401.7" r="2.100"/><circle cx="666.4" cy="401.7" r="2.100"/><circle cx="711.4" cy="401.7" r="2.100"/><circle cx="756.4" cy="401.7" r="2.100"/><circle cx="801.4" cy="401.7" r="2.100"/><circle cx="846.4" cy="401.7" r="2.100"/><circle cx="891.4" cy="401.7" r="2.100"/><circle cx="936.4" cy="401.7" r="2.100"/><circle cx="109.1" cy="444.0" r="2.100"/><circle cx="154.1" cy="444.0" r="2.100"/><circle cx="199.1" cy="444.0" r="2.100"/><circle cx="244.1" cy="444.0" r="2.100"/><circle cx="289.1" cy="444.0" r="2.100"/><circle cx="334.1" cy="444.0" r="2.100"/><circle cx="379.1" cy="444.0" r="2.100"/><circle cx="573.9" cy="444.0" r="2.100"/><circle cx="618.9" cy="444.0" r="2.100"/><circle cx="663.9" cy="444.0" r="2.100"/><circle cx="708.9" cy="444.0" r="2.100"/><circle cx="753.9" cy="444.0" r="2.100"/><circle cx="798.9" cy="444.0" r="2.100"/><circle cx="843.9" cy="444.0" r="2.100"/><circle cx="888.9" cy="444.0" r="2.100"/><circle cx="933.9" cy="444.0" r="2.100"/><circle cx="117.2" cy="486.1" r="2.100"/><circle cx="162.2" cy="486.1" r="2.100"/><circle cx="207.2" cy="486.1" r="2.100"/><circle cx="252.2" cy="486.1" r="2.100"/><circle cx="297.2" cy="486.1" r="2.100"/><circle cx="342.2" cy="486.1" r="2.100"/><circle cx="387.2" cy="486.1" r="2.100"/><circle cx="432.2" cy="486.1" r="2.100"/><circle cx="520.8" cy="486.1" r="2.100"/><circle cx="565.8" cy="486.1" r="2.100"/><circle cx="610.8" cy="486.1" r="2.100"/><circle cx="655.8" cy="486.1" r="2.100"/><circle cx="700.8" cy="486.1" r="2.100"/><circle cx="745.8" cy="486.1" r="2.100"/><circle cx="790.8" cy="486.1" r="2.100"/><circle cx="835.8" cy="486.1" r="2.100"/><circle cx="880.8" cy="486.1" r="2.100"/><circle cx="925.8" cy="486.1" r="2.100"/><circle cx="131.0" cy="528.5" r="2.100"/><circle cx="176.0" cy="528.5" r="2.100"/><circle cx="221.0" cy="528.5" r="2.100"/><circle cx="266.0" cy="528.5" r="2.100"/><circle cx="311.0" cy="528.5" r="2.100"/><circle cx="356.0" cy="528.5" r="2.100"/><circle cx="401.0" cy="528.5" r="2.100"/><circle cx="446.0" cy="528.5" r="2.100"/><circle cx="507.0" cy="528.5" r="2.100"/><circle cx="552.0" cy="528.5" r="2.100"/><circle cx="597.0" cy="528.5" r="2.100"/><circle cx="642.0" cy="528.5" r="2.100"/><circle cx="687.0" cy="528.5" r="2.100"/><circle cx="732.0" cy="528.5" r="2.100"/><circle cx="777.0" cy="528.5" r="2.100"/><circle cx="822.0" cy="528.5" r="2.100"/><circle cx="867.0" cy="528.5" r="2.100"/><circle cx="912.0" cy="528.5" r="2.100"/><circle cx="151.7" cy="571.0" r="2.100"/><circle cx="196.7" cy="571.0" r="2.100"/><circle cx="241.7" cy="571.0" r="2.100"/><circle cx="286.7" cy="571.0" r="2.100"/><circle cx="331.7" cy="571.0" r="2.100"/><circle cx="376.7" cy="571.0" r="2.100"/><circle cx="421.7" cy="571.0" r="2.100"/><circle cx="466.7" cy="571.0" r="2.100"/><circle cx="486.3" cy="571.0" r="2.100"/><circle cx="531.3" cy="571.0" r="2.100"/><circle cx="576.3" cy="571.0" r="2.100"/><circle cx="621.3" cy="571.0" r="2.100"/><circle cx="666.3" cy="571.0" r="2.100"/><circle cx="711.3" cy="571.0" r="2.100"/><circle cx="756.3" cy="571.0" r="2.100"/><circle cx="801.3" cy="571.0" r="2.100"/><circle cx="846.3" cy="571.0" r="2.100"/><circle cx="891.3" cy="571.0" r="2.100"/></g></g>
<g fill="none" stroke="#2c2c2c" stroke-width="1.150">
<rect x="458.700" y="275.700" width="40.600" height="41.600"/>
<path d="M433 317.300V325H422.200V338.400M424 340.200H431.500M431.5 337.2v6M434.1 337.2q1.800 3 0 6M434.100 340.200H444M444.0 340.2L444.7 338.2L446.1 342.2L447.6 338.2L449.0 342.2L450.4 338.2L451.8 342.2L453.3 338.2L454.7 342.2L455.4 340.2M455.400 340.200H462.400V357.300M379.700 359.500H394.300V377M396.100 378.900H404.500M404.5 375.9v6M407.1 375.9q-1.800 3 0 6M407.100 378.900H417.200M417.2 378.9L417.9 376.9L419.3 380.9L420.7 376.9L422.1 380.9L423.4 376.9L424.8 380.9L426.2 376.9L427.6 380.9L428.3 378.9M428.300 378.900H444.500M435.300 378.900V456.300M397.400 417.100H404.800M404.8 414.1v6M407.4 414.1q-1.800 3 0 6M407.400 417.100H417.700M417.7 417.1L418.4 415.1L419.8 419.1L421.2 415.1L422.6 419.1L424.1 415.1L425.5 419.1L426.9 415.1L428.3 419.1L429.0 417.1M429 417.100H463M397.400 456.300H407M407.0 453.3v6M409.6 453.3q-1.800 3 0 6M409.600 456.300H421.500M421.5 456.3L422.2 454.3L423.6 458.3L425.0 454.3L426.4 458.3L427.9 454.3L429.3 458.3L430.7 454.3L432.1 458.3L432.8 456.3M432.800 456.300H485M432.300 486.100V470.400H422.700V461.500M468 357.300V340.700H502.600M502.6 340.7L503.3 338.7L504.8 342.7L506.3 338.7L507.8 342.7L509.3 338.7L510.8 342.7L512.3 338.7L513.8 342.7L514.5 340.7M514.500 340.700H528.300V390.500M519.600 317.300V340.700M518.200 390.500H539.500M573 359.500H540.200V389.300M540.800 409.800V449.500M536.800 450h8M538.300 451.900h5M539.700 453.800h2.200M498 431.200H505.700M505.7 431.2L506.4 429.2L507.9 433.2L509.3 429.2L510.7 433.2L512.2 429.2L513.6 433.2L515.0 429.2L516.5 433.2L517.2 431.2M517.200 431.200H574.400V444M513 459.600V476L527.800 467.600ZM485 456.300V463.400H513M453.400 456.300V472.200H513M527.800 467.600H569.700M519.500 459.500V455M519.500 476.500V481"/>
<circle cx="422.2" cy="340.2" r="2" fill="#fff" stroke="#111" stroke-width="1.450"/>
<circle cx="394.3" cy="378.9" r="2" fill="#fff" stroke="#111" stroke-width="1.450"/>
<circle cx="395.6" cy="417.1" r="2" fill="#fff" stroke="#111" stroke-width="1.450"/>
<circle cx="395.6" cy="456.3" r="2" fill="#fff" stroke="#111" stroke-width="1.450"/>
<circle cx="540.8" cy="408.0" r="2" fill="#fff" stroke="#111" stroke-width="1.450"/>
<circle cx="540.800" cy="390.500" r="1.200" fill="#fff"/>
<circle cx="422.2" cy="355.8" r="1.900" fill="#fff" stroke="#111" stroke-width="1.400"/><path d="M422.2 357.5V364.0M418.4 364.0h7.500M419.7 365.9h5M421.1 367.8h2.200"/>
<circle cx="395.0" cy="393.7" r="1.900" fill="#fff" stroke="#111" stroke-width="1.400"/><path d="M395.0 395.4V401.8M391.2 401.8h7.500M392.5 403.7h5M393.9 405.6h2.200"/>
<circle cx="395.6" cy="432.4" r="1.900" fill="#fff" stroke="#111" stroke-width="1.400"/><path d="M395.6 434.1V439.5M391.9 439.5h7.500M393.1 441.4h5M394.5 443.3h2.200"/>
<circle cx="396.3" cy="470.9" r="1.900" fill="#fff" stroke="#111" stroke-width="1.400"/><path d="M396.3 472.6V477.2M392.6 477.2h7.500M393.8 479.1h5M395.2 481.0h2.200"/>
</g>
<g fill="#333" stroke="none"><path d="M422.700 459.500l-1.800 3.500h3.600zM519.500 453.500l-1.600 3h3.200zM519.500 482.500l-1.600-3h3.200z"/><circle cx="435.300" cy="378.900" r="1"/><circle cx="569.700" cy="467.600" r="1"/></g>
<g stroke-linejoin="round" stroke-linecap="round"><path d="M431.800 355.900L509.400 361.500L526.300 370.900L485.300 456.800Z" fill="#9e7b1f" stroke="#585858" stroke-width="3.200"/><path d="M484 398.500L435 358.400M484 398.500L507.200 363.600M484 398.500L523.500 371.300M484 398.500L484.900 453.500" fill="none" stroke="#56524a" stroke-width="2.700"/><path d="M431.800 355.900L509.400 361.500L526.300 370.900L485.300 456.800Z" fill="none" stroke="#a68a45" stroke-width=".7" stroke-opacity=".8"/><path d="M484 398.500L435 358.400M484 398.500L507.200 363.600M484 398.500L523.500 371.300M484 398.500L484.900 453.500" fill="none" stroke="#7a6c4c" stroke-width=".5" stroke-opacity=".6"/></g>
<g font-family="Liberation Sans,sans-serif" fill="#111" font-size="9.300" text-anchor="middle" stroke="#111" stroke-width=".3"><text x="478" y="244.300">Intelligent</text><text x="478.500" y="255.800">contract block</text><text x="478.500" y="267">block protocol</text><text x="535.500" y="288.800">Shared</text><text x="537" y="300.300">economy</text></g>
<g font-family="Liberation Sans,sans-serif" fill="#111" font-size="11.700" text-anchor="middle" stroke="#111" stroke-width=".12"><text x="415" y="294.600">Open</text><text x="416.300" y="307.900">Source</text><text x="474.800" y="500.800">POWER</text><text x="476.500" y="514.800">TRON</text></g>
</svg>
<div class="a" style="left:1000px;top:90px;width:16px;height:689px;background:linear-gradient(90deg,#ecebf3,#fbfbfd 50%,#f4f4f8)"></div>
<div class="a" style="left:1001.500px;top:91px;width:13.500px;height:16px;border:1px solid #b4b8c8;border-radius:2.500px;box-sizing:border-box;background:linear-gradient(90deg,#fafafd,#dfe0ea)"></div>
<div class="a" style="left:1001.500px;top:762px;width:13.500px;height:16px;border:1px solid #b4b8c8;border-radius:2.500px;box-sizing:border-box;background:linear-gradient(90deg,#fafafd,#dfe0ea)"></div>
<svg width="1" height="1" style="left:0;top:0"><polyline points="1004.800,101 1008.300,97 1011.800,101" fill="none" stroke="#222" stroke-width="2"/><polyline points="1004.800,768 1008.300,772 1011.800,768" fill="none" stroke="#222" stroke-width="2"/></svg>
<div class="a" style="left:1001.500px;top:427px;width:13.500px;height:17px;border:1px solid #b4b8c8;border-radius:2.500px;box-sizing:border-box;background:linear-gradient(90deg,#fdfdff,#e2e3ec)"></div>
<svg width="8" height="8" style="left:1004.500px;top:431.500px"><path d="M0 .5H7M0 2.500H7M0 4.500H7M0 6.500H7" stroke="#9aa0b4" stroke-width="1"/></svg>
<div class="a" style="left:5px;top:68px;width:59px;height:13px;background:linear-gradient(#585858,#3c3c3c)"></div>
<div class="a" style="left:5px;top:80.5px;width:59px;height:1.2px;background:#1c1c1c"></div>
<svg width="8" height="7" style="left:8px;top:72px"><path d="M3.500 0V6L0 3ZM7.500 0V6L4 3Z" fill="#e2e2e2"/></svg>
<div class="a" style="left:5px;top:81.7px;width:59px;height:473.300px;background:#d5d5d5"></div>
<div class="a" style="left:64px;top:68px;width:1px;height:485.700px;background:#4a4a4a"></div>
<div class="grip" style="left:9px;top:85px;width:52px"></div>
<div class="a" style="left:9px;top:143.7px;width:51px;height:1px;background:#b2b2b2;box-shadow:0 1px 0 #e8e8e8"></div>
<div class="a" style="left:9px;top:236.0px;width:51px;height:1px;background:#b2b2b2;box-shadow:0 1px 0 #e8e8e8"></div>
<div class="a" style="left:9px;top:305.3px;width:51px;height:1px;background:#b2b2b2;box-shadow:0 1px 0 #e8e8e8"></div>
<div class="a" style="left:9px;top:354.0px;width:51px;height:1px;background:#b2b2b2;box-shadow:0 1px 0 #e8e8e8"></div>
<div class="a" style="left:9px;top:379.6px;width:51px;height:1px;background:#b2b2b2;box-shadow:0 1px 0 #e8e8e8"></div>
<div class="a" style="left:9px;top:428.4px;width:51px;height:1px;background:#b2b2b2;box-shadow:0 1px 0 #e8e8e8"></div>
<div class="a" style="left:9px;top:484.5px;width:51px;height:1px;background:#b2b2b2;box-shadow:0 1px 0 #e8e8e8"></div>
<div class="a" style="left:9px;top:505.8px;width:51px;height:1px;background:#b2b2b2;box-shadow:0 1px 0 #e8e8e8"></div>
<div class="a" style="left:9px;top:528.0px;width:51px;height:1px;background:#b2b2b2;box-shadow:0 1px 0 #e8e8e8"></div>
<div class="a" style="left:10.500px;top:99.5px;width:23px;height:19.500px;background:#e6e6de;border:1px solid #bcbcb4;border-radius:3px;box-sizing:border-box"></div>
<svg width="70" height="560" style="left:0;top:0"><path d="M18.200 103.300V115l2.700-2.800 2.300 5.300 1.900-.8-2.300-5.200h3.700z" fill="#111"/><path d="M42.800 103.200V113l2.200-2.200 2.400 5.700 1.500-.7-2.400-5.500h3z" fill="#fff" stroke="#111" stroke-width="1.100" stroke-linejoin="round"/><path d="M45.800 111.200l2.400 5.400" stroke="#111" stroke-width="1.800"/><path d="M57.5 118.5v-3l-3 3z" fill="#111"/><path d="M20 129.300L28.600 138.400" stroke="#222" stroke-width="2.300"/><path d="M18.200 122.800v9.400M13.500 127.500h9.400M14.900 124.200l6.600 6.600M21.500 124.200l-6.600 6.600" stroke="#333" stroke-width=".9"/><circle cx="18.200" cy="127.500" r="1.300" fill="#111"/><ellipse cx="47.200" cy="129.300" rx="7.600" ry="4.900" fill="none" stroke="#333" stroke-width="1.400" transform="rotate(-8 47.200 129.300)"/><path d="M41 132c1.500 1.500 .5 3-.3 4.200s-.2 2.300 .6 3" fill="none" stroke="#333" stroke-width="1.200"/><path d="M48 129.500v8.500l1.900-1.700 1.600 3.200 1.500-.7-1.600-3.200h2.900z" fill="#fff" stroke="#111" stroke-width="1" stroke-linejoin="round"/><path d="M21.500 149.500l-3.800 8 2.300 5h3l2.300-5zM19.500 163.500h4v2h-4z" fill="#f4f4f4" stroke="#111" stroke-width="1.200"/><path d="M21.500 152v6.500" stroke="#111"/><circle cx="21.500" cy="159" r="1" fill="#111"/><path d="M31.5 167.0v-3l-3 3z" fill="#111"/><text x="41.500" y="164.300" font-family="Liberation Serif,serif" font-size="19" fill="#111">T</text><path d="M57.5 167.0v-3l-3 3z" fill="#111"/><path d="M15.500 174L28 186" stroke="#111" stroke-width="1.500"/><path d="M32.3 189.0v-3l-3 3z" fill="#111"/><defs><linearGradient id="rg" x1="0" y1="0" x2="1" y2="1"><stop offset="0" stop-color="#fff"/><stop offset="1" stop-color="#999"/></linearGradient></defs><rect x="40.500" y="174.500" width="13" height="10" fill="url(#rg)" stroke="#333" stroke-width="1.100"/><path d="M57.5 189.0v-3l-3 3z" fill="#111"/><path d="M30 195.500L21 204.500" stroke="#444" stroke-width="2.200"/><path d="M22 203.500c-2-.5-4 1-4.500 3-.3 1.200-1.500 1.800-2.500 1.800 2.500 1 6.500 .5 7.800-2.300z" fill="#222"/><path d="M52 195l2.500 2.500-10 10-3.500 1.500 1.500-3.500z" fill="#eee" stroke="#222" stroke-width="1.100"/><path d="M41 209l1.200-3 1.800 1.800z" fill="#111"/><path d="M50 197l2.500 2.500" stroke="#222"/><path d="M57.5 211.0v-3l-3 3z" fill="#111"/><path d="M13.500 219.500h12v9.500h-12z" fill="#f2f2f2" stroke="#111" stroke-width="1.400"/><path d="M30 215.500l-7 6" stroke="#333" stroke-width="2"/><path d="M24 220.500c-2.500 0-4 1.500-4.500 3.500-.3 1-1 1.500-2 1.500 2.500 1.200 6 .8 7.500-2z" fill="#333"/><path d="M45 219h9.500l-5.500 7.500h-9.500z" fill="#f6f6f6" stroke="#222" stroke-width="1.100"/><path d="M39.500 226.500h9.500v3h-9.500zM49 226.500l5.500-7.500v3l-5.500 7.500z" fill="#888" stroke="#222" stroke-width="1"/><path d="M57.5 233.0v-3l-3 3z" fill="#111"/><circle cx="22.500" cy="250.500" r="5.800" fill="none" stroke="#222" stroke-width="1.500" stroke-dasharray="1.800 1.600"/><path d="M16.500 246.500A6 6 0 0 1 27 246" fill="none" stroke="#222" stroke-width="1.500"/><path d="M16 243v4.500h4.500z" fill="#222"/><path d="M32.3 259.0v-3l-3 3z" fill="#111"/><rect x="39.500" y="242.500" width="11.500" height="9" fill="#eee" stroke="#222" stroke-width="1.100"/><rect x="47.500" y="249.500" width="6.500" height="6" fill="#ccc" stroke="#555" stroke-width="1"/><path d="M41.500 244.500l6 5M41.500 244.500h3.500M41.500 244.500v3.500" stroke="#111" stroke-width="1.300" fill="none"/><path d="M57.5 259.0v-3l-3 3z" fill="#111"/><path d="M13.500 271c2-4 5-5 7-2s4 3 6 1 3-4 4-3c-1 2-1 5-3 7s-5 1-7-1-5-2-7 1z" fill="#666"/><path d="M21 266l9 11" stroke="#222" stroke-width="1.300"/><circle cx="30" cy="277.500" r="1.600" fill="#fff" stroke="#222"/><circle cx="25.500" cy="272" r="1.500" fill="#fff" stroke="#222"/><path d="M33.0 281.0v-3l-3 3z" fill="#111"/><rect x="43.500" y="266" width="11" height="10.500" fill="none" stroke="#111" stroke-width="1.700" stroke-dasharray="2.200 1.600"/><path d="M39.500 265v10.500l2.500-2.500 3.500 .5 3-2.500z" fill="#222"/><ellipse cx="18.500" cy="291.500" rx="5" ry="4.500" fill="#eee" stroke="#333" stroke-width="1.300"/><ellipse cx="24" cy="290.500" rx="5" ry="4.500" fill="#eee" stroke="#333" stroke-width="1.300"/><circle cx="17" cy="291.500" r=".8"/><circle cx="20" cy="291.500" r=".8"/><path d="M23.500 291v10.500l2.500-2.400 1.900 3.800 1.700-.8-1.900-3.800h3.300z" fill="#fff" stroke="#111" stroke-width="1"/><path d="M33.0 303.0v-3l-3 3z" fill="#111"/><path d="M40 287l6-1.500v13l-6-1.500zM46 285.500l7 3v9l-7 1.500M40 292l6-.5 7 1M43 286.300v11.500M49.500 287v10.500M39 299.500l8 1.500 8-2" fill="none" stroke="#333" stroke-width="1.100"/><path d="M57.5 303.0v-3l-3 3z" fill="#111"/><rect x="15" y="314.500" width="14.500" height="11" fill="#e8e8e8" stroke="#222" stroke-width="1.200"/><path d="M15 320c5-3 9 2 14.500-1M21.500 314.500c-2 4 2 7 0 11M15 323c4-4 6-5 8-8.500M29.500 317c-4 1-6 4-7 8.500" fill="none" stroke="#222" stroke-width=".9"/><defs><linearGradient id="gg"><stop offset="0" stop-color="#fff"/><stop offset="1" stop-color="#111"/></linearGradient></defs><rect x="40" y="314.500" width="14.500" height="11" fill="url(#gg)" stroke="#222" stroke-width="1.200"/><path d="M28.500 333.500c1.500 1.500 1 3-.5 4.500l-2 2-3-3 2-2c1.500-1.500 2.500-2.500 3.500-1.500z" fill="#222"/><path d="M23.500 337.500l2.500 2.500-8 8-3 1.500 .8-3.200z" fill="#f4f4f4" stroke="#222" stroke-width="1.100"/><path d="M32.3 351.0v-3l-3 3z" fill="#111"/><rect x="39.500" y="333" width="5.500" height="5.500" fill="#eee" stroke="#555"/><circle cx="51" cy="345" r="3.200" fill="#eee" stroke="#444"/><path d="M45 338.500l1 1M47 340.500l1 1M43 340h1.500M44 342h1.500M47.500 338h1.500" stroke="#777" stroke-width="1.300"/><rect x="19.500" y="364.500" width="8" height="11" rx="1" fill="#eee" stroke="#222" stroke-width="1.200"/><circle cx="23.500" cy="371" r="2.200" fill="#fff" stroke="#222"/><circle cx="23.500" cy="371" r=".8"/><path d="M21.500 364.500v-2.500h3.500v2.500M21 361.500h-2" stroke="#222" fill="none" stroke-width="1.100"/><path d="M13.500 360h1.500M16 362h1.500M13.500 364h1.500M16.500 359h1" stroke="#444" stroke-width="1.300"/><path d="M32.3 378.0v-3l-3 3z" fill="#111"/><path d="M39 361v13.500h16" fill="none" stroke="#222" stroke-width="1.100"/><rect x="41" y="367.500" width="3" height="7" fill="#555"/><rect x="45.500" y="369.500" width="3" height="5" fill="#555"/><rect x="50" y="364.500" width="3" height="10" fill="#555"/><path d="M57.5 378.0v-3l-3 3z" fill="#111"/><rect x="16.500" y="389" width="9" height="10" fill="#f4f4f4" stroke="#222" stroke-width="1.200"/><path d="M14 389h2M26 389h2M14 399h2M26 399h2M16.500 386.500v2M25.500 386.500v2M16.500 400v2M25.500 400v2" stroke="#333" stroke-width=".9"/><path d="M54 387l-9 8-1 0-6 5.500 7-3.500 1-.5z" fill="#333"/><path d="M48 388l3 8" stroke="#555" stroke-width="1"/><path d="M57.5 404.0v-3l-3 3z" fill="#111"/><path d="M17.500 423.500c-2-2-4-5-4.500-7 1-1 2 0 3.500 2v-7.500c1-1 2-.5 2 0v-1.500c1-1 2-.5 2.200 0v1c1-.8 2-.3 2.200 .3v1.500c.8-.8 2-.3 2.200 .4 .2 3 0 6-.8 8.300l-1 2.500z" fill="#f8f8f8" stroke="#222" stroke-width="1.100"/><path d="M32.3 427.0v-3l-3 3z" fill="#111"/><circle cx="44.500" cy="416" r="4.300" fill="#f4f4f4" stroke="#222" stroke-width="1.400"/><path d="M47.800 419.300l5.700 5" stroke="#222" stroke-width="2.500" stroke-linecap="round"/><rect x="27.700" y="450.500" width="27.600" height="28.400" fill="#fff" stroke="#111" stroke-width="1.200"/><rect x="35.500" y="458.500" width="12" height="12.500" fill="#ddd" stroke="#222" stroke-width="1.100"/><path d="M28.500 478L54.500 451" stroke="#d2122e" stroke-width="2.300"/><defs><radialGradient id="fg"><stop offset="0" stop-color="#fff" stop-opacity=".35"/><stop offset=".4" stop-color="#e4ecee" stop-opacity=".55"/><stop offset=".8" stop-color="#9cc8d2" stop-opacity=".92"/><stop offset="1" stop-color="#6fb0c0"/></radialGradient><pattern id="ck" width="3.200" height="3.200" patternUnits="userSpaceOnUse"><rect width="3.200" height="3.200" fill="#fff"/><rect width="1.600" height="1.600" fill="#e2c8cc"/><rect x="1.600" y="1.600" width="1.600" height="1.600" fill="#e2c8cc"/></pattern></defs><rect x="13.500" y="435.500" width="27.600" height="28.400" fill="#081014" stroke="#111" stroke-width="1.200"/><rect x="15" y="437" width="24.600" height="25.400" fill="none" stroke="#e8e8e8" stroke-width=".8"/><circle cx="27.300" cy="449.700" r="11.300" fill="url(#ck)"/><circle cx="27.300" cy="449.700" r="11.300" fill="url(#fg)"/><path d="M47.500 437.500c4 0 6.500 2.500 6.500 6" fill="none" stroke="#222" stroke-width="1.400"/><path d="M47.800 435v5l-2.800-2.500zM51.500 443.200h5l-2.500 2.800z" fill="#222"/><rect x="17.500" y="473" width="6" height="5.500" fill="#111"/><rect x="14" y="469.500" width="6" height="5.500" fill="#fff" stroke="#111" stroke-width="1"/><rect x="12" y="490.800" width="10" height="10" fill="#2fa8bc"/><rect x="26.500" y="489" width="14" height="13" rx="2" fill="#eaeae2" stroke="#aaa"/><rect x="29" y="491.500" width="9" height="8.500" fill="#0c1418"/><circle cx="33.500" cy="495.700" r="3.600" fill="#eef2f3"/><circle cx="33.500" cy="495.700" r="3.600" fill="url(#fg)"/><rect x="47.500" y="491" width="9" height="9.500" fill="#fff" stroke="#bbb" stroke-width=".8"/><path d="M48 500L56 491.500" stroke="#d2122e" stroke-width="1.700"/><rect x="11.500" y="509.500" width="14" height="15.500" rx="2" fill="#e8e8e0" stroke="#aaa"/><circle cx="17.500" cy="516" r="4.300" fill="#f4f4f4" stroke="#222" stroke-width="1.200"/><rect x="18" y="517" width="6" height="6" fill="#888" stroke="#222" stroke-width="1"/><rect x="33.500" y="517" width="6" height="6" fill="#777" stroke="#222" stroke-width="1"/><circle cx="33" cy="516" r="4.300" fill="#f4f4f4" stroke="#222" stroke-width="1.200"/><circle cx="51" cy="516" r="4.200" fill="#f0f0f0" stroke="#999" stroke-width="1"/><path d="M51 516h4v3.500h-4z" fill="#bbb"/><rect x="32.500" y="533.500" width="12.500" height="9.500" fill="url(#rg)" stroke="#444" stroke-width="1"/><rect x="24.500" y="539" width="12.500" height="9.500" fill="url(#rg)" stroke="#444" stroke-width="1"/><rect x="24.500" y="539" width="12.500" height="2" fill="#fff"/></svg>
<div class="a" style="left:1016.500px;top:68px;width:255px;height:13px;background:linear-gradient(#5a5a5a,#3a3a3a)"></div>
<div class="a" style="left:1016.500px;top:80.500px;width:255px;height:1.200px;background:#1c1c1c"></div>
<svg width="8" height="6" style="left:1123px;top:72.5px"><path d="M3.500 0V5.500L0 2.750ZM7.500 0V5.500L4 2.750Z" fill="#e0e0e0"/></svg>
<svg width="8" height="6" style="left:1225.5px;top:72.5px"><path d="M3.500 0V5.500L0 2.750ZM7.500 0V5.500L4 2.750Z" fill="#e0e0e0"/></svg>
<svg width="8" height="6" style="left:1261px;top:72.5px"><path d="M3.500 0V5.500L0 2.750ZM7.500 0V5.500L4 2.750Z" fill="#e0e0e0"/></svg>
<div class="a" style="left:1017px;top:81.700px;width:116.300px;height:44.800px;background:#d6d6d6"></div>
<div class="grip" style="left:1021px;top:85px;width:108px"></div>
<svg width="20" height="20" style="left:1025px;top:99px"><defs><linearGradient id="qg" x1="0" y1="0" x2="1" y2="1"><stop offset="0" stop-color="#111"/><stop offset=".5" stop-color="#888"/><stop offset="1" stop-color="#fff"/></linearGradient></defs><path d="M1 1.500C10 2 17 8 18 17.500H1Z" fill="url(#qg)" stroke="#333" stroke-width="1.200"/></svg>
<div class="t" style="left:1052px;top:102.56px;font-size:10.8px;line-height:10.8px;color:#484848;font-family:'Liberation Sans',sans-serif;font-weight:bold;transform:scaleX(0.942);transform-origin:0 0;-webkit-text-stroke:.25px #484848;">Guía de color</div>
<div class="a" style="left:1134.500px;top:81.700px;width:100.500px;height:76px;background:#d6d6d6"></div>
<div class="grip" style="left:1138px;top:85px;width:93px"></div>
<div class="t" style="left:1145px;top:99px;font-size:18px;color:#3a3a3a;font-family:'DejaVu Sans',sans-serif;font-weight:bold">¶</div>
<div class="t" style="left:1170px;top:102.56px;font-size:10.8px;line-height:10.8px;color:#484848;font-family:'Liberation Sans',sans-serif;font-weight:bold;transform:scaleX(1.005);transform-origin:0 0;-webkit-text-stroke:.25px #484848;">Párrafo</div>
<div class="t" style="left:1143px;top:129px;font-size:18px;color:#222;font-family:'Liberation Serif',serif;font-style:italic">O</div>
<div class="t" style="left:1152.500px;top:138px;font-size:12px;color:#222;font-family:'Liberation Serif',serif;font-weight:bold;font-style:italic">T</div>
<div class="t" style="left:1170px;top:133.86px;font-size:10.8px;line-height:10.8px;color:#484848;font-family:'Liberation Sans',sans-serif;font-weight:bold;transform:scaleX(0.962);transform-origin:0 0;-webkit-text-stroke:.25px #484848;">OpenType</div>
<div class="a" style="left:1236px;top:81.7px;width:35.500px;height:107.3px;background:#d6d6d6"></div>
<div class="a" style="left:1236px;top:190.5px;width:35.500px;height:107.0px;background:#d6d6d6"></div>
<div class="a" style="left:1236px;top:299px;width:35.500px;height:76px;background:#d6d6d6"></div>
<div class="a" style="left:1236px;top:376.5px;width:35.500px;height:76.0px;background:#d6d6d6"></div>
<div class="grip" style="left:1240.500px;top:85px;width:27px"></div>
<div class="grip" style="left:1240.500px;top:194.5px;width:27px"></div>
<div class="grip" style="left:1240.500px;top:303px;width:27px"></div>
<div class="grip" style="left:1240.500px;top:380.5px;width:27px"></div>
<svg width="1276" height="460" style="left:0;top:0"><rect x="1245" y="101.500" width="17" height="13.300" fill="#1e1e1e"/><rect x="1246.2" y="102.7" width="3" height="3" fill="#454545"/><rect x="1250.3" y="102.7" width="3" height="3" fill="#777"/><rect x="1254.4" y="102.7" width="3" height="3" fill="#888"/><rect x="1258.5" y="102.7" width="3" height="3" fill="#fff"/><rect x="1246.2" y="106.8" width="3" height="3" fill="#555"/><rect x="1250.3" y="106.8" width="3" height="3" fill="#999"/><rect x="1254.4" y="106.8" width="3" height="3" fill="#333"/><rect x="1258.5" y="106.8" width="3" height="3" fill="#fff"/><rect x="1246.2" y="110.9" width="3" height="3" fill="#888"/><rect x="1250.3" y="110.9" width="3" height="3" fill="#fff"/><rect x="1254.4" y="110.9" width="3" height="3" fill="#fff"/><rect x="1258.5" y="110.9" width="3" height="3" fill="#ccc"/><rect x="1250" y="141" width="8.800" height="7.800" rx="1" fill="#111"/><rect x="1252.700" y="143.300" width="3.600" height="3.300" fill="#e4e4e4"/><path d="M1252 141l-3-6M1254.300 141v-8M1256.500 141l3-5" stroke="#222" stroke-width="1.300"/><path d="M1246.800 132.500c2 1 3.200 3.500 2.700 6-2-.8-3.300-3.200-2.700-6zM1253.200 130.500h2.200l-.3 5h-1.600zM1257.800 134.500c1.500-1.500 3.500-1.800 5-.8-.5 1.800-2.500 3.200-4.500 2.700z" fill="#222"/><defs><linearGradient id="cg" x1="0" y1="0" x2="0" y2="1"><stop offset="0" stop-color="#6a6a6a"/><stop offset="1" stop-color="#1a1a1a"/></linearGradient></defs><g fill="url(#cg)"><circle cx="1253.700" cy="166.800" r="3.600"/><circle cx="1249.800" cy="172" r="3.600"/><circle cx="1257.600" cy="172" r="3.600"/><path d="M1253 170h1.400l2 8.800h-5.400z"/></g><path d="M1245.500 211H1262.500" stroke="#333" stroke-width="1" stroke-dasharray="1.500 1"/><path d="M1245.500 214.500H1262.500" stroke="#222" stroke-width="1.500"/><path d="M1245.500 218H1262.500" stroke="#222" stroke-width="2"/><path d="M1245.500 222.300H1262.500" stroke="#222" stroke-width="2.800"/><rect x="1239.500" y="233.500" width="28" height="28.500" rx="3" fill="#9a9a9a" stroke="#6a6a6a"/><defs><linearGradient id="g2" x1="0" y1="0" x2="1" y2="0"><stop offset="0" stop-color="#fff"/><stop offset="1" stop-color="#222"/></linearGradient></defs><rect x="1246" y="241.500" width="16" height="13" fill="url(#g2)" stroke="#222" stroke-width="1.300"/><circle cx="1250.500" cy="276.500" r="6" fill="#444" stroke="#222"/><circle cx="1256.500" cy="282" r="6" fill="#e0e0e0" fill-opacity=".85" stroke="#333"/><defs><radialGradient id="ap" cx=".4" cy=".4"><stop offset="0" stop-color="#999"/><stop offset="1" stop-color="#222"/></radialGradient></defs><circle cx="1253.700" cy="325.700" r="8.300" fill="#e8e8e8" stroke="#666" stroke-width="1.200"/><circle cx="1253.700" cy="325.700" r="5.500" fill="url(#ap)"/><rect x="1250.500" y="350" width="12" height="12" fill="url(#rg)" stroke="#333"/><rect x="1245.500" y="358" width="6" height="6" fill="#fff" stroke="#222"/><rect x="1248.500" y="361" width="5" height="5" fill="#ccc" stroke="#222"/><path d="M1254 402.500l9 5-9 5-9-5z" fill="#222"/><path d="M1254 394l9 5-9 5-9-5z" fill="#f2f2f2" stroke="#888" stroke-width="1"/><path d="M1244.500 424.500h7l3.500 3.500v9h-10.500z" fill="#f6f6f6" stroke="#3a3a3a" stroke-width="1.100"/><path d="M1248.700 432.500h9l4.800 4.500v7.500h-13.800z" fill="url(#rg)" stroke="#3a3a3a" stroke-width="1.100"/></svg>
<div class="a" style="left:1021.500px;top:199.500px;width:213.500px;height:305.500px;background:#d6d6d6"></div>
<div class="a" style="left:1021.500px;top:199.500px;width:213.500px;height:19.500px;background:linear-gradient(#4a4a4a 0,#4a4a4a 1.500px,#999 1.500px,#8a8a8a 100%)"></div>
<div class="a" style="left:1022.500px;top:201px;width:35px;height:18px;background:linear-gradient(#a4a4a4,#909090);border:1px solid #6e6e6e;border-bottom:none;box-sizing:border-box"></div>
<div class="a" style="left:1136px;top:201px;width:35px;height:18px;background:linear-gradient(#a4a4a4,#909090);border:1px solid #6e6e6e;border-bottom:none;box-sizing:border-box"></div>
<div class="a" style="left:1021.500px;top:218.300px;width:213.500px;height:1px;background:#6e6e6e"></div>
<div class="a" style="left:1057.700px;top:201px;width:77.500px;height:18.500px;background:linear-gradient(#e4e4e4,#d6d6d6 4px)"></div>
<div class="t" style="left:1029px;top:205.06px;font-size:10.8px;line-height:10.8px;color:#4e4e4e;font-family:'Liberation Sans',sans-serif;font-weight:bold;transform:scaleX(1.010);transform-origin:0 0;">Trazo</div>
<div class="t" style="left:1068.2px;top:205.06px;font-size:10.8px;line-height:10.8px;color:#444;font-family:'Liberation Sans',sans-serif;font-weight:bold;transform:scaleX(0.963);transform-origin:0 0;-webkit-text-stroke:.25px #444;">Degradado</div>
<div class="a" style="left:1141px;top:203px;width:29.500px;height:15px;overflow:hidden"><div class="t" style="left:0.5px;top:2.06px;font-size:10.8px;line-height:10.8px;color:#4e4e4e;font-family:'Liberation Sans',sans-serif;font-weight:bold;transform:scaleX(1.010);transform-origin:0 0;">Transparencia</div></div>
<svg width="6" height="10" style="left:1061.500px;top:205.500px"><path d="M2.500 0L5 3.500H0ZM2.500 9L5 5.500H0Z" fill="#222"/></svg>
<svg width="10" height="6" style="left:1194.500px;top:207.500px"><path d="M0 0V5.500L4 2.750ZM5 0V5.500L9 2.750Z" fill="#2a2a2a"/></svg>
<div class="a" style="left:1211.500px;top:204px;width:1px;height:12px;background:#666"></div>
<svg width="16" height="8" style="left:1217px;top:207.5px"><path d="M0 1.500H4L2 4Z" fill="#2a2a2a"/><path d="M5.500 1H15M5.500 3.500H15M5.500 6H15" stroke="#2a2a2a" stroke-width="1.200"/></svg>
<div class="a" style="left:1029.500px;top:225.500px;width:28.500px;height:29.500px;background:#0a1014"></div>
<div class="a" style="left:1031.500px;top:228px;width:24.500px;height:24.500px;border-radius:50%;background:radial-gradient(circle,rgba(255,250,250,.9) 0,rgba(228,235,237,.8) 40%,rgba(127,182,196,.95) 100%),repeating-conic-gradient(#d8c8c8 0 25%,#fff 0 50%) 0 0/3px 3px"></div>
<div class="a" style="left:1060px;top:225px;width:8px;height:30px;border:1px solid #999;box-sizing:border-box;background:linear-gradient(#f0f0f0,#d0d0d0)"></div>
<svg width="6" height="4" style="left:1061.500px;top:237px"><path d="M0 0H5.500L2.750 3.500Z" fill="#111"/></svg>
<div class="t" style="left:1071.5px;top:233.07px;font-size:11.5px;line-height:11.5px;color:#111;font-family:'Liberation Sans',sans-serif;transform:scaleX(0.915);transform-origin:0 0;">Tipo:</div>
<div class="inp" style="left:1096.500px;top:228.500px;width:119.500px;height:19px;border-color:#8ea0c0"></div>
<div class="t" style="left:1100px;top:233.07px;font-size:11.5px;line-height:11.5px;color:#111;font-family:'Liberation Sans',sans-serif;transform:scaleX(0.813);transform-origin:0 0;">Radial</div>
<div class="ddb" style="left:1199px;top:229.500px;width:16px;height:17px"></div>
<svg width="1" height="1" style="left:0;top:0"><polyline points="1203.9,236.5 1207.0,240.5 1210.1,236.5" fill="none" stroke="#1a1a3a" stroke-width="2" stroke-linecap="square"/></svg>
<svg width="18" height="16" style="left:1035px;top:264.500px"><rect x=".5" y=".5" width="6" height="5" fill="#222"/><rect x="9.500" y="9.500" width="6.500" height="5" fill="#bbb" stroke="#222"/><path d="M8 2.500h5v3M4 13h-3v-4" fill="none" stroke="#111" stroke-width="1.400"/><path d="M10.800 5h4.400l-2.200 2.800zM-1.200 9.500h4.400l-2.200-2.800z" fill="#111"/></svg>
<svg width="12" height="10" style="left:1077px;top:266.500px"><path d="M.5 8.500H10.500L7.500 .5Z" fill="#e8e8e8" stroke="#666" stroke-width="1"/><path d="M3.500 8.500A4 4 0 0 0 2.500 5.500" fill="none" stroke="#555"/></svg>
<div class="inp" style="left:1095.500px;top:262.500px;width:29px;height:18px;border-color:#b8bcc8"></div>
<div class="t" style="left:1101.5px;top:266.19px;font-size:11px;line-height:11px;color:#111;font-family:'Liberation Sans',sans-serif;transform:scaleX(0.736);transform-origin:0 0;">0</div>
<div class="ddb" style="left:1124.500px;top:262.500px;width:15px;height:18px"></div>
<svg width="1" height="1" style="left:0;top:0"><polyline points="1129.800,267.500 1134.300,271.500 1129.800,275.500" fill="none" stroke="#1a1a3a" stroke-width="2"/><circle cx="1144.300" cy="264" r="1.500" fill="none" stroke="#222"/></svg>
<svg width="18" height="15" style="left:1152px;top:264.500px"><path d="M2.500 1V13M.5 3L2.500 .8 4.500 3M.5 11l2 2.200 2-2.200" fill="none" stroke="#111" stroke-width="1.100"/><ellipse cx="11.500" cy="6" rx="5" ry="3.500" fill="#ddd" stroke="#555"/><path d="M6 12.500H17" stroke="#888" stroke-dasharray="1 1"/></svg>
<div class="inp" style="left:1170.500px;top:262.500px;width:45.500px;height:18px;border-color:#b8bcc8"></div>
<div class="t" style="left:1177px;top:266.19px;font-size:11px;line-height:11px;color:#111;font-family:'Liberation Sans',sans-serif;transform:scaleX(0.747);transform-origin:0 0;">100</div>
<div class="t" style="left:1216.5px;top:266.57px;font-size:11.5px;line-height:11.5px;color:#111;font-family:'Liberation Sans',sans-serif;transform:scaleX(0.831);transform-origin:0 0;">%</div>
<svg width="1" height="1" style="left:0;top:0"><path d="M1141.700 285l4.600 4.500-4.600 4.500-4.600-4.500zM1191.500 285l4.600 4.500-4.600 4.500-4.600-4.500z" fill="#fff" stroke="#333" stroke-width="1.100"/></svg>
<div class="a" style="left:1031.500px;top:293.700px;width:166px;height:123.500px;border:1.500px solid #111;box-sizing:border-box;background:linear-gradient(90deg,rgba(255,255,255,0) 0,rgba(235,238,239,.1) 25%,rgba(205,210,212,.5) 42%,rgba(172,180,183,.85) 56%,rgba(160,184,190,.85) 70%,rgba(125,190,203,.92) 84%,#66c2d4 93%,#50b4c8 98%,#2c7888 99.300%,#1c5060 100%),repeating-conic-gradient(#cfcfcf 0 25%,#fff 0 50%) 0 0/4px 4px"></div>
<svg width="12" height="14" style="left:1203.500px;top:295.500px"><path d="M2 4h8l-.8 9h-6.400zM1 3h10M4.500 1.500h3" fill="#e8e8e8" stroke="#aaa" stroke-width="1.100"/><path d="M4.500 6v5M6 6v5M7.500 6v5" stroke="#b5b5b5" stroke-width=".8"/></svg>
<svg width="1" height="1" style="left:0;top:0"><path d="M1080.0 417.800l4.500 5v11h-9v-11z" fill="#fff" stroke="#111" stroke-width="1"/><rect x="1076.8" y="424" width="6.400" height="6.500" fill="#111"/><path d="M1190.5 417.800l4.500 5v11h-9v-11z" fill="#fff" stroke="#111" stroke-width="1"/><rect x="1187.3" y="424" width="6.400" height="6.500" fill="#2fb0c4"/><path d="M1197.5 417.800l4.500 5v11h-9v-11z" fill="#fff" stroke="#111" stroke-width="1"/><rect x="1194.3" y="424" width="6.400" height="6.500" fill="#111"/></svg>
<div class="t" style="left:1046.5px;top:447.87px;font-size:11.5px;line-height:11.5px;color:#a4a4a4;font-family:'Liberation Sans',sans-serif;transform:scaleX(0.887);transform-origin:0 0;text-shadow:1px 1px 0 #f4f4f4;">Opacidad:</div>
<div class="a" style="left:1095.500px;top:442.5px;width:45.500px;height:19px;border:1px solid #c4c4c4;box-sizing:border-box;background:#d8d8d8"></div>
<div class="a" style="left:1123px;top:443.5px;width:17px;height:17px;background:#e6e6e0"></div>
<svg width="1" height="1" style="left:0;top:0"><polyline points="1129.500,448.0 1134,452.0 1129.500,456.0" fill="none" stroke="#c0c0b4" stroke-width="2"/></svg>
<div class="t" style="left:1142.5px;top:447.87px;font-size:11.5px;line-height:11.5px;color:#a4a4a4;font-family:'Liberation Sans',sans-serif;transform:scaleX(0.880);transform-origin:0 0;text-shadow:1px 1px 0 #f4f4f4;">%</div>
<div class="t" style="left:1045px;top:472.87px;font-size:11.5px;line-height:11.5px;color:#a4a4a4;font-family:'Liberation Sans',sans-serif;transform:scaleX(0.875);transform-origin:0 0;text-shadow:1px 1px 0 #f4f4f4;">Ubicación:</div>
<div class="a" style="left:1095.500px;top:467.5px;width:45.500px;height:19px;border:1px solid #c4c4c4;box-sizing:border-box;background:#d8d8d8"></div>
<div class="a" style="left:1123px;top:468.5px;width:17px;height:17px;background:#e6e6e0"></div>
<svg width="1" height="1" style="left:0;top:0"><polyline points="1129.500,473.0 1134,477.0 1129.500,481.0" fill="none" stroke="#c0c0b4" stroke-width="2"/></svg>
<div class="t" style="left:1142.5px;top:472.87px;font-size:11.5px;line-height:11.5px;color:#a4a4a4;font-family:'Liberation Sans',sans-serif;transform:scaleX(0.880);transform-origin:0 0;text-shadow:1px 1px 0 #f4f4f4;">%</div>
<svg width="11" height="11" style="left:1222px;top:492.500px"><rect x="9.0" y="9.0" width="1" height="1" fill="#a0a0a0"/><rect x="7.0" y="9.0" width="1" height="1" fill="#a0a0a0"/><rect x="5.0" y="9.0" width="1" height="1" fill="#a0a0a0"/><rect x="3.0" y="9.0" width="1" height="1" fill="#a0a0a0"/><rect x="1.0" y="9.0" width="1" height="1" fill="#a0a0a0"/><rect x="9.0" y="7.0" width="1" height="1" fill="#a0a0a0"/><rect x="7.0" y="7.0" width="1" height="1" fill="#a0a0a0"/><rect x="5.0" y="7.0" width="1" height="1" fill="#a0a0a0"/><rect x="3.0" y="7.0" width="1" height="1" fill="#a0a0a0"/><rect x="9.0" y="5.0" width="1" height="1" fill="#a0a0a0"/><rect x="7.0" y="5.0" width="1" height="1" fill="#a0a0a0"/><rect x="5.0" y="5.0" width="1" height="1" fill="#a0a0a0"/><rect x="9.0" y="3.0" width="1" height="1" fill="#a0a0a0"/><rect x="7.0" y="3.0" width="1" height="1" fill="#a0a0a0"/><rect x="9.0" y="1.0" width="1" height="1" fill="#a0a0a0"/></svg>
<div class="a" style="left:1020.700px;top:573px;width:214px;height:64.500px;background:#d6d6d6;border-radius:3px 3px 0 0"></div>
<div class="a" style="left:1020.700px;top:573px;width:214px;height:13px;background:linear-gradient(#555,#353535);border-radius:3px 3px 0 0"></div>
<svg width="8" height="6" style="left:1209px;top:577.5px"><path d="M3.500 0V5.500L0 2.750ZM7.500 0V5.500L4 2.750Z" fill="#f0f0f0"/></svg>
<div class="a" style="left:1220.500px;top:576px;width:1px;height:9px;background:#777"></div>
<svg width="8" height="8" style="left:1225px;top:576.500px"><path d="M1 1L6.500 6.500M6.500 1L1 6.500" stroke="#f4f4f4" stroke-width="1.800"/></svg>
<div class="a" style="left:1020.700px;top:586px;width:214px;height:18px;background:linear-gradient(#969696,#888);border-bottom:1px solid #6e6e6e;box-sizing:border-box"></div>
<div class="a" style="left:1021.500px;top:586px;width:48px;height:18.500px;background:linear-gradient(#e4e4e4,#d6d6d6 4px)"></div>
<svg width="6" height="10" style="left:1025px;top:590.500px"><path d="M2.500 0L5 3.500H0ZM2.500 9L5 5.500H0Z" fill="#222"/></svg>
<div class="t" style="left:1032.5px;top:590.36px;font-size:10.8px;line-height:10.8px;color:#444;font-family:'Liberation Sans',sans-serif;font-weight:bold;transform:scaleX(0.904);transform-origin:0 0;-webkit-text-stroke:.25px #444;">Color</div>
<svg width="16" height="8" style="left:1216px;top:592px"><path d="M0 1.500H4L2 4Z" fill="#2a2a2a"/><path d="M5.500 1H15M5.500 3.500H15M5.500 6H15" stroke="#2a2a2a" stroke-width="1.200"/></svg>
<div class="a" style="left:1025.700px;top:607.500px;width:199.500px;height:17.500px;background:#000"></div>
<div class="a" style="left:1026.700px;top:608.500px;width:15.500px;height:15.500px;background:#fff"></div>
<svg width="1" height="1" style="left:0;top:0"><path d="M1027 623.500L1042 609" stroke="#c4102a" stroke-width="1.700"/></svg>
<div class="a" style="left:1042.700px;top:608.500px;width:166.300px;height:15.500px;background:linear-gradient(rgba(255,255,255,.55) 0,rgba(255,255,255,0) 38%,rgba(0,0,0,0) 42%,rgba(0,0,0,.75) 78%,#000 100%),linear-gradient(90deg,#e01818 0,#f08a18 8%,#f4f020 16%,#6cc024 27%,#189a38 36%,#18a0a0 45%,#30b0e0 52%,#2050b8 62%,#1c1890 68%,#7a1890 75%,#e01890 84%,#e81848 93%,#e01818 100%)"></div>
<div class="a" style="left:1209px;top:608.500px;width:15.500px;height:8px;background:#fff"></div>
<div class="a" style="left:65px;top:779px;width:951px;height:17px;background:linear-gradient(#f0eff6,#fbfbfd 50%,#f2f2f7)"></div>
<div class="a" style="left:65px;top:779px;width:364px;height:17px;background:#d3d3d3"></div>
<div class="a" style="left:65px;top:779px;width:951px;height:1px;background:#bdbdbd"></div>
<div class="a" style="left:65px;top:780px;width:42.500px;height:16px;background:#fff"></div>
<div class="t" style="left:70.3px;top:782.69px;font-size:11px;line-height:11px;color:#111;font-family:'Liberation Sans',sans-serif;transform:scaleX(0.895);transform-origin:0 0;">89%</div>
<div class="ddb" style="left:107px;top:780px;width:16px;height:16px"></div>
<svg width="1" height="1" style="left:0;top:0"><polyline points="111.9,787.5 115.0,791.5 118.1,787.5" fill="none" stroke="#1a1a3a" stroke-width="2" stroke-linecap="square"/></svg>
<svg width="110" height="12" style="left:127px;top:783px"><g fill="#9a9a9a"><rect x=".5" y="1" width="1.800" height="9"/><path d="M8 1V10L3 5.500Z"/><path d="M24 1V10L19.500 5.500Z"/><path d="M80 1V10L84.500 5.500Z"/><path d="M94 1V10L98.500 5.500Z"/><rect x="99" y="1" width="1.800" height="9"/></g></svg>
<div class="a" style="left:157.500px;top:780px;width:27px;height:16px;background:#fff"></div>
<div class="t" style="left:163px;top:782.69px;font-size:11px;line-height:11px;color:#111;font-family:'Liberation Sans',sans-serif;transform:scaleX(0.654);transform-origin:0 0;">1</div>
<div class="ddb" style="left:184px;top:780px;width:16px;height:16px"></div>
<svg width="1" height="1" style="left:0;top:0"><polyline points="188.9,787.5 192.0,791.5 195.1,787.5" fill="none" stroke="#1a1a3a" stroke-width="2" stroke-linecap="square"/></svg>
<div class="a" style="left:235px;top:780.500px;width:176px;height:15.500px;background:#d8d8d8;border-left:1px solid #bbb;box-sizing:border-box"></div>
<div class="t" style="left:303.4px;top:783.07px;font-size:11.5px;line-height:11.5px;color:#111;font-family:'Liberation Sans',sans-serif;transform:scaleX(0.834);transform-origin:0 0;">Selección</div>
<svg width="7" height="10" style="left:401px;top:783px"><path d="M0 0V9L6 4.500Z" fill="#111"/></svg>
<div class="a" style="left:412px;top:780px;width:16.500px;height:15.500px;border:1px solid #b4b8c8;border-radius:2.500px;box-sizing:border-box;background:linear-gradient(#fafafd,#dfe0ea)"></div>
<div class="a" style="left:984px;top:780px;width:16.500px;height:15.500px;border:1px solid #b4b8c8;border-radius:2.500px;box-sizing:border-box;background:linear-gradient(#fafafd,#dfe0ea)"></div>
<svg width="1" height="1" style="left:0;top:0"><polyline points="422.500,784 418.500,788 422.500,792" fill="none" stroke="#222" stroke-width="2"/><polyline points="990.500,784 994.500,788 990.500,792" fill="none" stroke="#222" stroke-width="2"/></svg>
<div class="a" style="left:698px;top:780px;width:17px;height:15.500px;border:1px solid #b4b8c8;border-radius:2.500px;box-sizing:border-box;background:linear-gradient(#fdfdff,#e2e3ec)"></div>
<svg width="8" height="8" style="left:702.500px;top:784px"><path d="M.5 0V7M2.500 0V7M4.500 0V7M6.500 0V7" stroke="#9aa0b4" stroke-width="1"/></svg>
<div class="a" style="left:1000px;top:779px;width:16px;height:17px;background:#f4f4f8"></div>
<div class="a" style="left:65px;top:795px;width:951px;height:1px;background:#707070"></div>
<div class="a" style="left:65px;top:779px;width:364px;height:1.500px;background:#eaeaea"></div>
<div class="a" style="left:0;top:0;width:4px;height:796px;background:#dedede;border-left:1px solid #777;box-sizing:border-box"></div>
<div class="a" style="left:4px;top:35px;width:1px;height:761px;background:#7d7d7d"></div>
<div class="a" style="left:1272px;top:0;width:4px;height:796px;background:#dcdcdc;border-right:1px solid #8a8a8a;box-sizing:border-box"></div>
<div class="a" style="left:1271px;top:35px;width:1px;height:761px;background:#7d7d7d"></div>
<div class="a" style="left:0;top:0;width:1276px;height:1px;background:#777"></div>
<svg width="6" height="6" style="left:0;top:0"><path d="M0 0H5Q0 0 0 5Z" fill="#fff"/><path d="M.5 5.5Q.5 .5 5.5 .5" fill="none" stroke="#777"/></svg>
<svg width="6" height="6" style="left:1270px;top:0"><path d="M6 0H1Q6 0 6 5Z" fill="#fff"/><path d="M5.5 5.5Q5.5 .5 .5 .5" fill="none" stroke="#777"/></svg>
</body></html>
